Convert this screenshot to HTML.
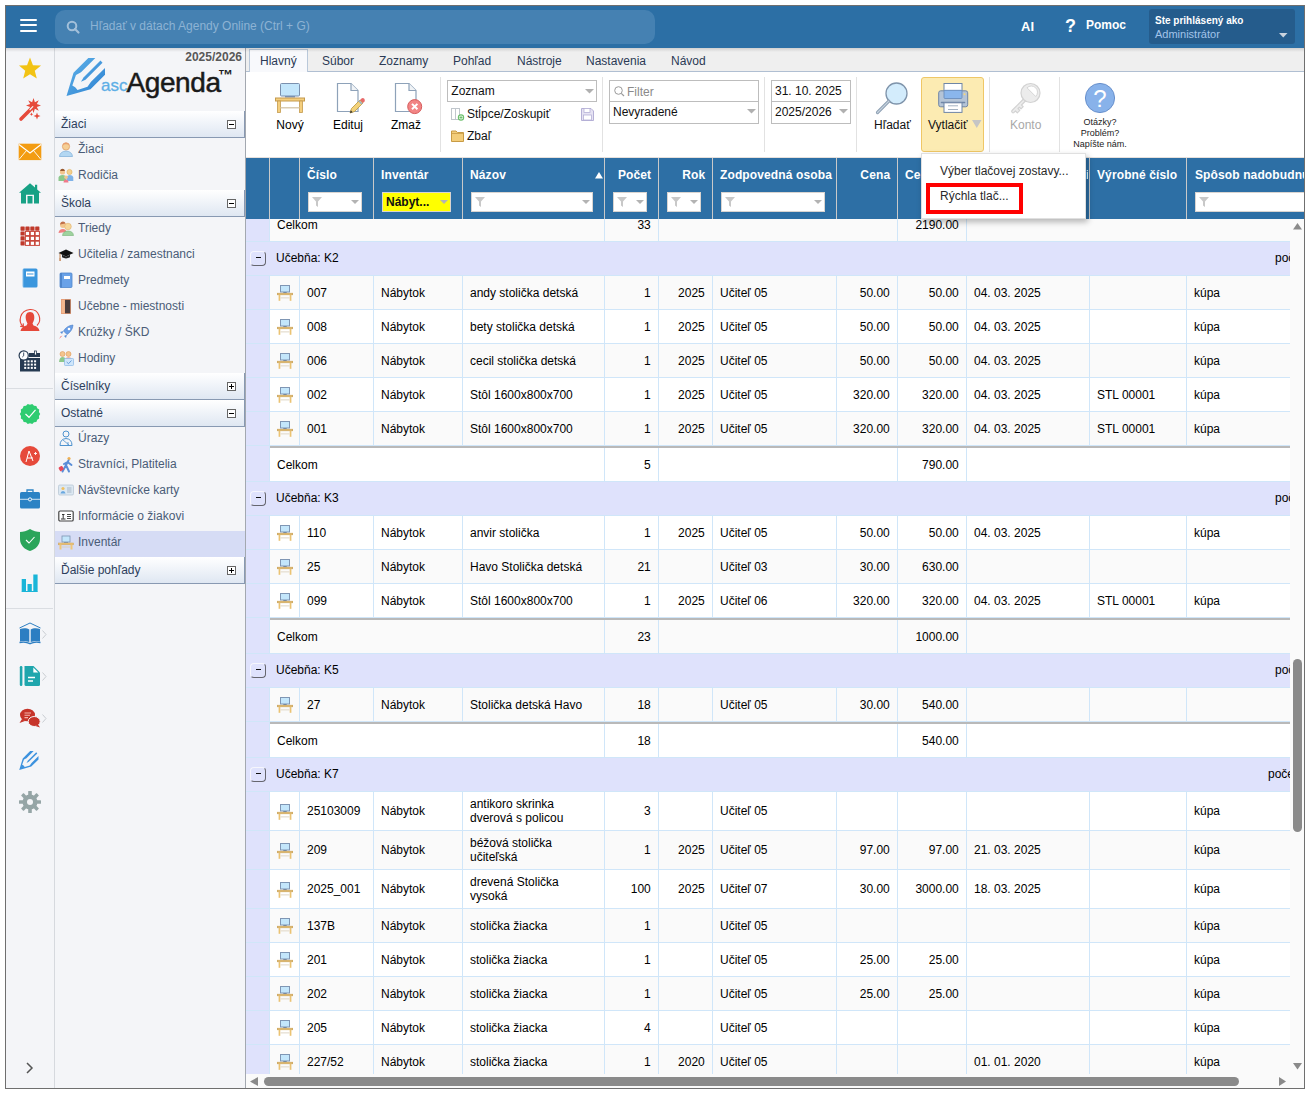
<!DOCTYPE html><html><head><meta charset="utf-8"><style>
*{box-sizing:border-box}
html,body{margin:0;padding:0}
body{width:1310px;height:1094px;position:relative;overflow:hidden;background:#fff;font-family:"Liberation Sans",sans-serif;font-size:12px;color:#000}
.a{position:absolute}
.t{position:absolute;white-space:nowrap;line-height:14px}
.r{text-align:right}
svg{position:absolute;overflow:visible}
</style></head><body><div class="a" style="left:5px;top:5px;width:1300px;height:1084px;border:1px solid #6f6f6f;background:#fff"></div>
<div class="a" style="left:6px;top:6px;width:1298px;height:42px;background:#2c6fa5"></div>
<div class="a" style="left:20px;top:19px;width:17px;height:2px;background:#fff;border-radius:1px"></div>
<div class="a" style="left:20px;top:24px;width:17px;height:2px;background:#fff;border-radius:1px"></div>
<div class="a" style="left:20px;top:30px;width:17px;height:2px;background:#fff;border-radius:1px"></div>
<div class="a" style="left:55px;top:10px;width:600px;height:34px;background:#4581b2;border-radius:10px"></div>
<svg style="left:66px;top:20px" width="14" height="14" viewBox="0 0 14 14"><circle cx="6" cy="6" r="4.3" fill="none" stroke="#a3c0da" stroke-width="2"/><line x1="9" y1="9" x2="12.5" y2="12.5" stroke="#a3c0da" stroke-width="2.2" stroke-linecap="round"/></svg>
<div class="t" style="left:90px;top:19.34px;font-size:12px;line-height:14px;color:#8db3d4">Hľadať v dátach Agendy Online (Ctrl + G)</div>
<div class="t" style="left:1021px;top:18.70px;font-size:13px;line-height:15px;color:#fff;font-weight:bold">AI</div>
<div class="t" style="left:1065px;top:16.26px;font-size:18px;line-height:21px;color:#fff;font-weight:bold">?</div>
<div class="t" style="left:1086px;top:17.84px;font-size:12px;line-height:14px;color:#fff;font-weight:bold">Pomoc</div>
<div class="a" style="left:1149px;top:9px;width:146px;height:35px;background:#255c8c;border-radius:3px"></div>
<div class="t" style="left:1155px;top:13.73px;font-size:10px;line-height:14px;color:#fff;font-weight:bold">Ste prihlásený ako</div>
<div class="t" style="left:1155px;top:27.19px;font-size:11px;line-height:14px;color:#a3c4ea">Administrátor</div>
<svg style="left:1279px;top:33px" width="9" height="5" viewBox="0 0 9 5"><path d="M0 0 L8.5 0 L4.25 4.5 Z" fill="#c9d3de"/></svg>
<div class="a" style="left:6px;top:48px;width:49px;height:1040px;background:#f4f5f8;border-right:1px solid #d6d9de"></div>
<div class="a" style="left:6px;top:388px;width:47px;height:1px;background:#dadde2"></div>
<div class="a" style="left:6px;top:608px;width:47px;height:1px;background:#dadde2"></div>
<svg style="left:14px;top:52px" width="32" height="32" viewBox="0 0 32 32"><polygon points="16.00,5.60 18.94,13.15 27.03,13.62 20.76,18.75 22.82,26.58 16.00,22.20 9.18,26.58 11.24,18.75 4.97,13.62 13.06,13.15" fill="#f2c314"/></svg>
<svg style="left:14px;top:94px" width="32" height="32" viewBox="0 0 32 32"><polygon points="19.50,4.00 20.88,8.17 24.80,6.20 22.83,10.12 27.00,11.50 22.83,12.88 24.80,16.80 20.88,14.83 19.50,19.00 18.12,14.83 14.20,16.80 16.17,12.88 12.00,11.50 16.17,10.12 14.20,6.20 18.12,8.17" fill="#e64a3b"/><path d="M7 25 L18 14" stroke="#e64a3b" stroke-width="3.6" stroke-linecap="round"/><path d="M16 15.5 L18.8 12.7" stroke="#f4f5f8" stroke-width="1.2" stroke-linecap="round"/><polygon points="19.30,20.30 18.07,20.87 17.50,22.10 16.93,20.87 15.70,20.30 16.93,19.73 17.50,18.50 18.07,19.73" fill="#e64a3b"/><polygon points="26.50,22.00 23.92,22.92 23.00,25.50 22.08,22.92 19.50,22.00 22.08,21.08 23.00,18.50 23.92,21.08" fill="#e64a3b"/></svg>
<svg style="left:14px;top:136px" width="32" height="32" viewBox="0 0 32 32"><rect x="4.7" y="7.7" width="22.6" height="16.4" fill="#f39c12"/><path d="M5 8.5 L16 17 L27 8.5" fill="none" stroke="#fff" stroke-width="1.1"/><path d="M5 23.5 L12.5 14.5 M27 23.5 L19.5 14.5" stroke="#fff" stroke-width="0.9"/></svg>
<svg style="left:14px;top:178px" width="32" height="32" viewBox="0 0 32 32"><path d="M16 5.2 L21 9.5 V6.7 H23.2 V11.5 L27 14.8 H25 V25.5 H20 V16.7 H12 V25.5 H7 V14.8 H5 Z" fill="#17a185"/><rect x="13.5" y="18" width="5" height="7.5" fill="#17a185"/></svg>
<svg style="left:14px;top:220px" width="32" height="32" viewBox="0 0 32 32"><rect x="6.5" y="6.5" width="4.2" height="4.2" rx="0.6" fill="#c0392b"/><rect x="6.5" y="11.4" width="4.2" height="4.2" rx="0.6" fill="#c0392b"/><rect x="6.5" y="16.3" width="4.2" height="4.2" rx="0.6" fill="#c0392b"/><rect x="6.5" y="21.200000000000003" width="4.2" height="4.2" rx="0.6" fill="#c0392b"/><rect x="11.4" y="6.5" width="4.2" height="4.2" rx="0.6" fill="#c0392b"/><rect x="11.4" y="11.4" width="4.2" height="4.2" fill="#fff" stroke="#c8483c" stroke-width="1"/><rect x="11.4" y="16.3" width="4.2" height="4.2" fill="#fff" stroke="#c8483c" stroke-width="1"/><rect x="11.4" y="21.200000000000003" width="4.2" height="4.2" fill="#fff" stroke="#c8483c" stroke-width="1"/><rect x="16.3" y="6.5" width="4.2" height="4.2" rx="0.6" fill="#c0392b"/><rect x="16.3" y="11.4" width="4.2" height="4.2" fill="#fff" stroke="#c8483c" stroke-width="1"/><rect x="16.3" y="16.3" width="4.2" height="4.2" fill="#fff" stroke="#c8483c" stroke-width="1"/><rect x="16.3" y="21.200000000000003" width="4.2" height="4.2" fill="#fff" stroke="#c8483c" stroke-width="1"/><rect x="21.200000000000003" y="6.5" width="4.2" height="4.2" rx="0.6" fill="#c0392b"/><rect x="21.200000000000003" y="11.4" width="4.2" height="4.2" fill="#fff" stroke="#c8483c" stroke-width="1"/><rect x="21.200000000000003" y="16.3" width="4.2" height="4.2" fill="#fff" stroke="#c8483c" stroke-width="1"/><rect x="21.200000000000003" y="21.200000000000003" width="4.2" height="4.2" fill="#fff" stroke="#c8483c" stroke-width="1"/></svg>
<svg style="left:14px;top:262px" width="32" height="32" viewBox="0 0 32 32"><rect x="8.5" y="6.5" width="15" height="19" rx="1.5" fill="#3a96dd"/><rect x="12" y="9.5" width="8.5" height="5" fill="#fff"/><rect x="13" y="11.5" width="6.5" height="1" fill="#3a96dd"/><path d="M8 8 h1.5 M8 10 h1.5 M8 12 h1.5 M8 14 h1.5 M8 16 h1.5 M8 18 h1.5 M8 20 h1.5 M8 22 h1.5 M8 24 h1.5" stroke="#fff" stroke-width="0.7"/></svg>
<svg style="left:14px;top:304px" width="32" height="32" viewBox="0 0 32 32"><path d="M16 8 C19.5 8 20.5 11 20.3 14 C20.2 16.5 19 18.5 18.5 19.5 L19.5 21.5 C23 22.3 25 24 25.5 27 H6.5 C7 24 9 22.3 12.5 21.5 L13.5 19.5 C13 18.5 11.8 16.5 11.7 14 C11.5 11 12.5 8 16 8 Z" fill="#e5483a"/><path d="M9 22.5 C4 18 5.5 6.5 16 5.5 C25 5 28.5 16 23 21.5" fill="none" stroke="#e5483a" stroke-width="1.1"/><path d="M6.2 22.4 L9.4 22.7 L9.2 19.4" fill="none" stroke="#e5483a" stroke-width="1.1"/></svg>
<svg style="left:14px;top:345px" width="32" height="32" viewBox="0 0 32 32"><rect x="6" y="13" width="20" height="13.5" fill="#263a52"/><rect x="15" y="8" width="11" height="4" fill="#263a52"/><rect x="20.5" y="6" width="2" height="4" fill="#fff" stroke="#263a52" stroke-width="0.8"/><rect x="10.2" y="15.3" width="2" height="2" fill="#fff"/><rect x="10.2" y="18.6" width="2" height="2" fill="#fff"/><rect x="10.2" y="21.9" width="2" height="2" fill="#fff"/><rect x="13.5" y="15.3" width="2" height="2" fill="#fff"/><rect x="13.5" y="18.6" width="2" height="2" fill="#fff"/><rect x="13.5" y="21.9" width="2" height="2" fill="#fff"/><rect x="16.799999999999997" y="15.3" width="2" height="2" fill="#fff"/><rect x="16.799999999999997" y="18.6" width="2" height="2" fill="#fff"/><rect x="16.799999999999997" y="21.9" width="2" height="2" fill="#fff"/><rect x="20.099999999999998" y="15.3" width="2" height="2" fill="#fff"/><rect x="20.099999999999998" y="18.6" width="2" height="2" fill="#fff"/><rect x="20.099999999999998" y="21.9" width="2" height="2" fill="#fff"/><circle cx="9.7" cy="10.5" r="4.6" fill="#fff" stroke="#263a52" stroke-width="1.2"/><path d="M9.7 7.5 V10.8 L8.3 12" fill="none" stroke="#263a52" stroke-width="0.9"/></svg>
<svg style="left:14px;top:398px" width="32" height="32" viewBox="0 0 32 32"><polygon points="26.20,16.00 24.97,18.05 25.19,20.43 23.19,21.74 22.36,23.97 19.99,24.29 18.27,25.94 16.00,25.20 13.73,25.94 12.01,24.29 9.64,23.97 8.81,21.74 6.81,20.43 7.03,18.05 5.80,16.00 7.03,13.95 6.81,11.57 8.81,10.26 9.64,8.03 12.01,7.71 13.73,6.06 16.00,6.80 18.27,6.06 19.99,7.71 22.36,8.03 23.19,10.26 25.19,11.57 24.97,13.95" fill="#2ecc71"/><path d="M11.5 16 L15 19.3 L21.5 11.8" fill="none" stroke="#fff" stroke-width="1.2"/></svg>
<svg style="left:14px;top:440px" width="32" height="32" viewBox="0 0 32 32"><circle cx="16" cy="16" r="10" fill="#e64a3b"/><path d="M12 22 L15 11 L19 21 M13 18 H19" fill="none" stroke="#fff" stroke-width="1"/><path d="M20 13.5 H23 M21.5 12 V15" stroke="#fff" stroke-width="0.9"/></svg>
<svg style="left:14px;top:482px" width="32" height="32" viewBox="0 0 32 32"><rect x="6" y="10" width="20" height="16.5" rx="1.5" fill="#2b82c4"/><path d="M13 10 V8 H19 V10" fill="none" stroke="#2b82c4" stroke-width="1.3"/><path d="M6 17.3 H26" stroke="#cfe3f3" stroke-width="1"/><circle cx="16" cy="17.4" r="1.6" fill="#2b82c4" stroke="#fff" stroke-width="0.9"/></svg>
<svg style="left:14px;top:524px" width="32" height="32" viewBox="0 0 32 32"><path d="M16 5 C19 7 23 8 26 8 V15 C26 21 21.5 25.5 16 27 C10.5 25.5 6 21 6 15 V8 C9 8 13 7 16 5 Z" fill="#2aa55a"/><path d="M12 16 L15 19 L20.5 13" fill="none" stroke="#fff" stroke-width="1.1"/></svg>
<svg style="left:14px;top:566px" width="32" height="32" viewBox="0 0 32 32"><rect x="7.7" y="13" width="4.3" height="12.5" fill="#19b5d8"/><rect x="13.5" y="18" width="4.3" height="7.5" fill="#19b5d8"/><rect x="19.3" y="8.5" width="4.3" height="17" fill="#19b5d8"/><rect x="7.7" y="25" width="15.9" height="1" fill="#19b5d8"/></svg>
<svg style="left:14px;top:618px" width="32" height="32" viewBox="0 0 32 32"><path d="M5.5 10 L16 5 L26.5 10" fill="none" stroke="#2c7ec2" stroke-width="1"/><path d="M6 11 C9 10 13 10 15.3 11.5 V24 C13 23 9 23 6 23.5 Z" fill="#2c7ec2"/><path d="M26 11 C23 10 19 10 16.7 11.5 V24 C19 23 23 23 26 23.5 Z" fill="#2c7ec2"/><path d="M5.5 24.5 C9 23.8 13 24 16 25.7 C19 24 23 23.8 26.5 24.5" fill="none" stroke="#2c7ec2" stroke-width="1.4"/></svg>
<svg style="left:42px;top:630px" width="6" height="10" viewBox="0 0 6 10"><path d="M0.5 0.5 L4 4.5 L0.5 8.5" fill="none" stroke="#c9cdd2" stroke-width="1"/></svg>
<svg style="left:14px;top:660px" width="32" height="32" viewBox="0 0 32 32"><rect x="5.8" y="6" width="2.6" height="20" rx="1.2" fill="#1fa6ad"/><path d="M10.5 6 H19.5 L26 12.5 V24.5 Q26 26 24.5 26 H12 Q10.5 26 10.5 24.5 Z" fill="#1fa6ad"/><path d="M19.3 7.5 L24.3 12.5 H19.3 Z" fill="#fff"/><path d="M14 17.5 H21 M14 21 H19" stroke="#fff" stroke-width="1.5"/></svg>
<svg style="left:42px;top:672px" width="6" height="10" viewBox="0 0 6 10"><path d="M0.5 0.5 L4 4.5 L0.5 8.5" fill="none" stroke="#c9cdd2" stroke-width="1"/></svg>
<svg style="left:14px;top:702px" width="32" height="32" viewBox="0 0 32 32"><ellipse cx="13.5" cy="13" rx="7.5" ry="6.3" fill="#c6342a"/><path d="M8 17 L5.5 21 L11 19" fill="#c6342a"/><ellipse cx="20.2" cy="19.5" rx="6" ry="5" fill="#c6342a" stroke="#f4f5f8" stroke-width="1"/><path d="M24 22.5 L26 25.5 L21.5 24" fill="#c6342a"/><path d="M10.5 11 H17 M10.5 13.3 H16 M10.5 15.6 H14" stroke="#f3b5ae" stroke-width="1.1"/></svg>
<svg style="left:42px;top:714px" width="6" height="10" viewBox="0 0 6 10"><path d="M0.5 0.5 L4 4.5 L0.5 8.5" fill="none" stroke="#c9cdd2" stroke-width="1"/></svg>
<svg style="left:17px;top:748px" width="24" height="24" viewBox="0 0 24 24"><g transform="scale(0.5)"><path d="M26.3 6 L33.3 6 L19 20.3 L14 23 L10.3 33.5 Q13.5 34.5 15.5 38 L25.5 34.8 L29 29.8 L43 16 L43 22.8 L28.5 37.2 L4.5 44 L11.5 20.8 Z" fill="#3d92de"/><path d="M38.5 8.5 L40.5 10.8 L23.5 27.7 L19 29.8 L21.5 25.5 Z" fill="#3d92de"/></g></svg>
<svg style="left:14px;top:786px" width="32" height="32" viewBox="0 0 32 32"><rect x="14.2" y="5" width="3.6" height="5" rx="0.5" fill="#95a5a6" transform="rotate(0 16 16)"/><rect x="14.2" y="5" width="3.6" height="5" rx="0.5" fill="#95a5a6" transform="rotate(45 16 16)"/><rect x="14.2" y="5" width="3.6" height="5" rx="0.5" fill="#95a5a6" transform="rotate(90 16 16)"/><rect x="14.2" y="5" width="3.6" height="5" rx="0.5" fill="#95a5a6" transform="rotate(135 16 16)"/><rect x="14.2" y="5" width="3.6" height="5" rx="0.5" fill="#95a5a6" transform="rotate(180 16 16)"/><rect x="14.2" y="5" width="3.6" height="5" rx="0.5" fill="#95a5a6" transform="rotate(225 16 16)"/><rect x="14.2" y="5" width="3.6" height="5" rx="0.5" fill="#95a5a6" transform="rotate(270 16 16)"/><rect x="14.2" y="5" width="3.6" height="5" rx="0.5" fill="#95a5a6" transform="rotate(315 16 16)"/><circle cx="16" cy="16" r="7.5" fill="#95a5a6"/><circle cx="16" cy="16" r="3" fill="#f4f5f8"/></svg>
<svg style="left:26px;top:1062px" width="8" height="12" viewBox="0 0 8 12"><path d="M1 1 L6 6 L1 11" fill="none" stroke="#555" stroke-width="1.5"/></svg>
<div class="a" style="left:55px;top:48px;width:191px;height:1040px;background:#f4f5f8;border-right:1px solid #a3a8b0"></div>
<div class="t r" style="left:162px;width:80px;top:50.34px;font-size:12px;line-height:14px;color:#585858;font-weight:bold">2025/2026</div>
<svg style="left:62px;top:52px" width="50" height="50" viewBox="0 0 50 50"><defs><linearGradient id="lg" x1="0" y1="0" x2="1" y2="1"><stop offset="0" stop-color="#62b4ea"/><stop offset="1" stop-color="#2a7fd0"/></linearGradient></defs><path d="M26.3 6 L33.3 6 L19 20.3 L14 23 L10.3 33.5 Q13.5 34.5 15.5 38 L25.5 34.8 L29 29.8 L43 16 L43 22.8 L28.5 37.2 L4.5 44 L11.5 20.8 Z" fill="url(#lg)"/><path d="M38.5 8.5 L40.5 10.8 L23.5 27.7 L19 29.8 L21.5 25.5 Z" fill="url(#lg)"/></svg>
<div class="t" style="left:101px;top:76.41px;font-size:17px;line-height:20px;color:#5eaee6;-webkit-text-stroke:0.3px #5eaee6">asc</div>
<div class="t" style="left:126.5px;top:66.20px;font-size:28px;line-height:33px;color:#1a1a1a;-webkit-text-stroke:0.5px #1a1a1a;letter-spacing:-0.4px">Agenda</div>
<div class="t" style="left:218px;top:65.80px;font-size:15px;line-height:18px;color:#1a1a1a;font-weight:bold">™</div>
<div class="a" style="left:55px;top:111px;width:190px;height:27px;background:linear-gradient(#ffffff,#dfe7f2);border-bottom:1px solid #8899b2;border-right:1px solid #8899b2"></div>
<div class="t" style="left:61px;top:116.54px;font-size:12px;line-height:14px;color:#2d3e5c">Žiaci</div>
<div class="a" style="left:227px;top:120px;width:9px;height:9px;background:#fff;border:1px solid #666"></div>
<div class="a" style="left:229px;top:124px;width:5px;height:1px;background:#000"></div>
<div class="t" style="left:78px;top:141.84px;font-size:12px;line-height:14px;color:#4a5c77">Žiaci</div>
<svg style="left:58px;top:141px" width="16" height="16" viewBox="0 0 16 16"><circle cx="8" cy="5.5" r="3.6" fill="#f6cf95" stroke="#e0a068" stroke-width="0.8"/><path d="M4.5 4.5 Q5 1.5 8 1.5 Q11 1.5 11.5 4.5 Q10 3 8 3.2 Q6 3 4.5 4.5Z" fill="#e8a070"/><path d="M1.5 15.5 Q2 10.5 8 10 Q14 10.5 14.5 15.5 Z" fill="#b3d7f2" stroke="#86b4dc" stroke-width="0.8"/></svg>
<div class="t" style="left:78px;top:167.84px;font-size:12px;line-height:14px;color:#4a5c77">Rodičia</div>
<svg style="left:58px;top:167px" width="16" height="16" viewBox="0 0 16 16"><circle cx="4.5" cy="5" r="2.6" fill="#f3c58e"/><path d="M2 4 Q2.5 1.8 4.5 1.8 Q6.5 1.8 7 4Z" fill="#9a5a30"/><path d="M0.5 14 V10.5 Q1 8 4.5 8 Q8 8 8 10.5 V14Z" fill="#8cc88c"/><circle cx="11.5" cy="5" r="2.6" fill="#f3d08e" stroke="#e0b060" stroke-width="0.6"/><path d="M8.5 14 V10.5 Q9 8 11.5 8 Q15 8 15.3 10.5 V14Z" fill="#7fb2e8"/><circle cx="8" cy="10.3" r="1.8" fill="#f3c58e"/><path d="M5.5 15.5 Q5.7 12.5 8 12.5 Q10.3 12.5 10.5 15.5Z" fill="#f07a8a"/></svg>
<div class="a" style="left:55px;top:190px;width:190px;height:27px;background:linear-gradient(#ffffff,#dfe7f2);border-bottom:1px solid #8899b2;border-right:1px solid #8899b2"></div>
<div class="t" style="left:61px;top:195.54px;font-size:12px;line-height:14px;color:#2d3e5c">Škola</div>
<div class="a" style="left:227px;top:199px;width:9px;height:9px;background:#fff;border:1px solid #666"></div>
<div class="a" style="left:229px;top:203px;width:5px;height:1px;background:#000"></div>
<div class="t" style="left:78px;top:220.84px;font-size:12px;line-height:14px;color:#4a5c77">Triedy</div>
<svg style="left:58px;top:220px" width="16" height="16" viewBox="0 0 16 16"><circle cx="5" cy="5" r="3" fill="#f3c58e"/><path d="M2 4.5 Q2.5 1.5 5 1.5 Q7 1.5 7.5 3.5Z" fill="#c0704a"/><path d="M0.5 13 Q1 9 5 9 Q8 9 8.5 12 Z" fill="#f08080"/><circle cx="10" cy="6.5" r="3.3" fill="#f6d79a" stroke="#e0b070" stroke-width="0.6"/><path d="M4.5 15.5 Q5 11 10 11 Q15 11 15.5 15.5 Z" fill="#9ed29e" stroke="#76b276" stroke-width="0.6"/></svg>
<div class="t" style="left:78px;top:246.84px;font-size:12px;line-height:14px;color:#4a5c77">Učitelia / zamestnanci</div>
<svg style="left:58px;top:246px" width="16" height="16" viewBox="0 0 16 16"><path d="M0.5 7 L8 3.5 L15.5 7 L8 10.5 Z" fill="#111"/><path d="M4 8.7 V11.3 Q8 13.5 12 11.3 V8.7 L8 10.5Z" fill="#222"/><path d="M2 7.5 V13" stroke="#c07840" stroke-width="0.9"/><rect x="1.4" y="12.5" width="1.3" height="2.5" fill="#c07840"/></svg>
<div class="t" style="left:78px;top:272.84px;font-size:12px;line-height:14px;color:#4a5c77">Predmety</div>
<svg style="left:58px;top:272px" width="16" height="16" viewBox="0 0 16 16"><rect x="2" y="1" width="12" height="14.5" rx="1" fill="#6aa2e8" stroke="#4f86cc" stroke-width="0.8"/><rect x="2" y="1" width="2" height="14.5" fill="#4f86cc"/><rect x="6" y="4" width="6" height="3" fill="#fff"/></svg>
<div class="t" style="left:78px;top:298.84px;font-size:12px;line-height:14px;color:#4a5c77">Učebne - miestnosti</div>
<svg style="left:58px;top:298px" width="16" height="16" viewBox="0 0 16 16"><rect x="3" y="1" width="10" height="15" fill="#e8a07a"/><rect x="7" y="1.8" width="5.3" height="13.5" fill="#4a3c3c"/><rect x="3.8" y="2" width="3" height="13" fill="#f4b890"/></svg>
<div class="t" style="left:78px;top:324.84px;font-size:12px;line-height:14px;color:#4a5c77">Krúžky / ŠKD</div>
<svg style="left:58px;top:324px" width="16" height="16" viewBox="0 0 16 16"><path d="M15 1 Q9 1.5 5.5 7 L9 10.5 Q14.5 7 15 1Z" fill="#6a9ee6" stroke="#4c80c8" stroke-width="0.6"/><circle cx="11" cy="5" r="1.3" fill="#fff"/><path d="M5.5 7 L2 8 L4 10Z M9 10.5 L8 14 L6 12Z" fill="#5a8ed8"/><path d="M4.5 11.5 L1 15 L2.5 12.5 Z" fill="#f06060"/></svg>
<div class="t" style="left:78px;top:350.84px;font-size:12px;line-height:14px;color:#4a5c77">Hodiny</div>
<svg style="left:58px;top:350px" width="16" height="16" viewBox="0 0 16 16"><circle cx="4.5" cy="4" r="2.5" fill="#f3c58e" stroke="#e09a5a" stroke-width="0.6"/><circle cx="10.5" cy="4" r="2.5" fill="#f3c58e" stroke="#e09a5a" stroke-width="0.6"/><path d="M1 12 Q1.5 7 4.5 7 Q7.5 7 8 10 V12Z" fill="#8cc88c"/><path d="M7 10 Q7.5 7 10.5 7 Q13 7 13.5 9Z" fill="#f0b0a0"/><rect x="6.5" y="8.5" width="9" height="7" rx="0.8" fill="#cfe6fb" stroke="#8ab8e6" stroke-width="0.7"/><path d="M8.7 12 L10.5 13.7 L13.5 10.5" fill="none" stroke="#5a94d6" stroke-width="0.9"/></svg>
<div class="a" style="left:55px;top:373px;width:190px;height:27px;background:linear-gradient(#ffffff,#dfe7f2);border-bottom:1px solid #8899b2;border-right:1px solid #8899b2"></div>
<div class="t" style="left:61px;top:378.54px;font-size:12px;line-height:14px;color:#2d3e5c">Číselníky</div>
<div class="a" style="left:227px;top:382px;width:9px;height:9px;background:#fff;border:1px solid #666"></div>
<div class="a" style="left:229px;top:386px;width:5px;height:1px;background:#000"></div>
<div class="a" style="left:231px;top:384px;width:1px;height:5px;background:#000"></div>
<div class="a" style="left:55px;top:400px;width:190px;height:27px;background:linear-gradient(#ffffff,#dfe7f2);border-bottom:1px solid #8899b2;border-right:1px solid #8899b2"></div>
<div class="t" style="left:61px;top:405.54px;font-size:12px;line-height:14px;color:#2d3e5c">Ostatné</div>
<div class="a" style="left:227px;top:409px;width:9px;height:9px;background:#fff;border:1px solid #666"></div>
<div class="a" style="left:229px;top:413px;width:5px;height:1px;background:#000"></div>
<div class="t" style="left:78px;top:430.84px;font-size:12px;line-height:14px;color:#4a5c77">Úrazy</div>
<svg style="left:58px;top:430px" width="16" height="16" viewBox="0 0 16 16"><circle cx="8" cy="4" r="3" fill="none" stroke="#4f93cf" stroke-width="1"/><path d="M2 15.5 Q2 9 8 8.5 Q14 9 14 15.5Z" fill="none" stroke="#4f93cf" stroke-width="1"/><path d="M5 10 L11 15 M10 15.5 V12" stroke="#4f93cf" stroke-width="0.8"/></svg>
<div class="t" style="left:78px;top:456.84px;font-size:12px;line-height:14px;color:#4a5c77">Stravníci, Platitelia</div>
<svg style="left:58px;top:456px" width="16" height="16" viewBox="0 0 16 16"><circle cx="11" cy="2.5" r="1.6" fill="#f0b050"/><path d="M10.5 4.5 L7.5 10 L4.5 15.5 M8 9 L11 15.5 M9.5 6 L13.5 9 M9.5 6 L6 8" stroke="#5a8ed8" stroke-width="2" fill="none" stroke-linecap="round"/><rect x="1" y="10.5" width="4.3" height="4.3" rx="1" fill="#e84a5a" transform="rotate(-30 3 12.5)"/></svg>
<div class="t" style="left:78px;top:482.84px;font-size:12px;line-height:14px;color:#4a5c77">Návštevnícke karty</div>
<svg style="left:58px;top:482px" width="16" height="16" viewBox="0 0 16 16"><rect x="0.5" y="3" width="15" height="10" rx="1.3" fill="#dce8f2" stroke="#b9c8d6" stroke-width="0.8"/><circle cx="5" cy="6.5" r="1.6" fill="#f0c060"/><path d="M2.5 11.5 Q2.7 9 5 9 Q7.3 9 7.5 11.5Z" fill="#6aa8e0"/><path d="M9 6 H13.5 M9 8 H13.5 M9 10 H13.5" stroke="#a8b8c8" stroke-width="1"/></svg>
<div class="t" style="left:78px;top:508.84px;font-size:12px;line-height:14px;color:#4a5c77">Informácie o žiakovi</div>
<svg style="left:58px;top:508px" width="16" height="16" viewBox="0 0 16 16"><rect x="0.8" y="3" width="14.4" height="10" rx="1.3" fill="#fff" stroke="#444" stroke-width="1.2"/><path d="M3 11 H7.5 M5.2 10.8 V6.5 M4 6.5 H6.5" stroke="#333" stroke-width="1"/><path d="M9 6.5 H13 M9 8.5 H13 M9 10.5 H13" stroke="#333" stroke-width="0.9"/></svg>
<div class="a" style="left:55px;top:531px;width:190px;height:26px;background:#d6dcf5"></div>
<div class="t" style="left:78px;top:534.84px;font-size:12px;line-height:14px;color:#4a5c77">Inventár</div>
<svg style="left:58px;top:534px" width="16" height="16" viewBox="0 0 16 16"><rect x="4" y="2" width="8" height="6" fill="#c3e6fb" stroke="#7d94b2" stroke-width="0.8"/><rect x="6" y="8" width="4" height="1" fill="#7d94b2"/><rect x="0.5" y="9" width="15" height="1.8" fill="#f0c77a" stroke="#c9a055" stroke-width="0.5"/><rect x="1.5" y="10.5" width="2" height="5" fill="#f0c77a"/><rect x="12.5" y="10.5" width="2" height="5" fill="#f0c77a"/><rect x="3.5" y="12.5" width="9" height="1" fill="#d8d0c0"/></svg>
<div class="a" style="left:55px;top:557px;width:190px;height:27px;background:linear-gradient(#ffffff,#dfe7f2);border-bottom:1px solid #8899b2;border-right:1px solid #8899b2"></div>
<div class="t" style="left:61px;top:562.54px;font-size:12px;line-height:14px;color:#2d3e5c">Ďalšie pohľady</div>
<div class="a" style="left:227px;top:566px;width:9px;height:9px;background:#fff;border:1px solid #666"></div>
<div class="a" style="left:229px;top:570px;width:5px;height:1px;background:#000"></div>
<div class="a" style="left:231px;top:568px;width:1px;height:5px;background:#000"></div>
<div class="a" style="left:246px;top:48px;width:1058px;height:24px;background:#efefef;border-bottom:1px solid #b0bfd2"></div>
<div class="a" style="left:249px;top:49px;width:59px;height:23px;background:#f8f9fc;border:1px solid #b9c8da;border-bottom:none"></div>
<div class="t" style="left:260px;top:53.54px;font-size:12px;line-height:14px;color:#2b3a55">Hlavný</div>
<div class="t" style="left:322px;top:53.54px;font-size:12px;line-height:14px;color:#2b3a55">Súbor</div>
<div class="t" style="left:379px;top:53.54px;font-size:12px;line-height:14px;color:#2b3a55">Zoznamy</div>
<div class="t" style="left:453px;top:53.54px;font-size:12px;line-height:14px;color:#2b3a55">Pohľad</div>
<div class="t" style="left:517px;top:53.54px;font-size:12px;line-height:14px;color:#2b3a55">Nástroje</div>
<div class="t" style="left:586px;top:53.54px;font-size:12px;line-height:14px;color:#2b3a55">Nastavenia</div>
<div class="t" style="left:671px;top:53.54px;font-size:12px;line-height:14px;color:#2b3a55">Návod</div>
<div class="a" style="left:246px;top:72px;width:1058px;height:86px;background:#fff"></div>
<div class="a" style="left:246px;top:157px;width:1058px;height:1px;background:#e6e0dc"></div>
<div class="a" style="left:440px;top:77px;width:1px;height:75px;background:#e2e2e2"></div>
<div class="a" style="left:602px;top:77px;width:1px;height:75px;background:#e2e2e2"></div>
<div class="a" style="left:764px;top:77px;width:1px;height:75px;background:#e2e2e2"></div>
<div class="a" style="left:856px;top:77px;width:1px;height:75px;background:#e2e2e2"></div>
<div class="a" style="left:989px;top:77px;width:1px;height:75px;background:#e2e2e2"></div>
<div class="a" style="left:1059px;top:77px;width:1px;height:75px;background:#e2e2e2"></div>
<svg style="left:275px;top:83px" width="30" height="30" viewBox="0 0 30 30"><rect x="5.5" y="0.5" width="19" height="12.5" rx="1" fill="#c3e6fb" stroke="#7a90ae" stroke-width="1"/><rect x="10" y="13" width="10" height="1.5" fill="#7a90ae"/><rect x="0.5" y="15" width="29" height="3" fill="#f5cf7e" stroke="#c49a4e" stroke-width="1"/><rect x="2.5" y="18" width="3" height="11.5" fill="#f5cf7e" stroke="#c49a4e" stroke-width="0.8"/><rect x="24.5" y="18" width="3" height="11.5" fill="#f5cf7e" stroke="#c49a4e" stroke-width="0.8"/><rect x="5.5" y="24" width="19" height="1.5" fill="#d9ccb2"/></svg>
<div class="t" style="left:230.0px;width:120px;text-align:center;top:118.14px;font-size:12px;line-height:14px;">Nový</div>
<svg style="left:337px;top:83px" width="22" height="30" viewBox="0 0 22 30"><path d="M0.5 0.5 H14 L21 7.5 V28.5 H0.5 Z" fill="#fff" stroke="#8ea2b9" stroke-width="1.2"/><path d="M14 0.5 V7.5 H21" fill="#f0f3f6" stroke="#8ea2b9" stroke-width="1.2"/></svg>
<svg style="left:349px;top:98px" width="16" height="16" viewBox="0 0 16 16"><path d="M1 15 L2.5 10.5 L11 2 L14 5 L5.5 13.5 Z" fill="#f3d27a" stroke="#b8943c" stroke-width="0.8"/><path d="M11 2 L12.5 0.5 Q14 -0.5 15.3 0.8 Q16.3 2 15.5 3.5 L14 5 Z" fill="#e86a6a"/><path d="M10 3 L13 6" stroke="#9ab0c8" stroke-width="1.6"/><path d="M1 15 L1.8 12.3 L3.7 14.2 Z" fill="#333"/></svg>
<div class="t" style="left:288.0px;width:120px;text-align:center;top:118.14px;font-size:12px;line-height:14px;">Edituj</div>
<svg style="left:395px;top:83px" width="22" height="30" viewBox="0 0 22 30"><path d="M0.5 0.5 H14 L21 7.5 V28.5 H0.5 Z" fill="#fff" stroke="#8ea2b9" stroke-width="1.2"/><path d="M14 0.5 V7.5 H21" fill="#f0f3f6" stroke="#8ea2b9" stroke-width="1.2"/></svg>
<svg style="left:407px;top:99px" width="16" height="16" viewBox="0 0 16 16"><circle cx="7.7" cy="7.6" r="7" fill="#f28585" stroke="#d65b5b" stroke-width="1"/><path d="M5 4.9 L10.4 10.3 M10.4 4.9 L5 10.3" stroke="#fff" stroke-width="2"/></svg>
<div class="t" style="left:346.0px;width:120px;text-align:center;top:118.14px;font-size:12px;line-height:14px;">Zmaž</div>
<div class="a" style="left:447px;top:80px;width:150px;height:22px;border:1px solid #bdbdbd;background:#fff"></div>
<div class="t" style="left:451.3px;top:84.34px;font-size:12px;line-height:14px;color:#111">Zoznam</div>
<svg style="left:585px;top:89px" width="9" height="5" viewBox="0 0 9 5"><path d="M0 0 H9 L4.5 4.5 Z" fill="#b0b0b0"/></svg>
<svg style="left:451px;top:108px" width="13" height="13" viewBox="0 0 13 13"><rect x="0.5" y="0.5" width="4" height="11" fill="#fff" stroke="#c0c6cc" stroke-width="1"/><rect x="4.5" y="0.5" width="4" height="11" fill="#fff" stroke="#c0c6cc" stroke-width="1"/><circle cx="10" cy="9.5" r="2.6" fill="#fff" stroke="#6cbf6c" stroke-width="1.2"/><path d="M10 8 V11 M8.5 9.5 H11.5" stroke="#6cbf6c" stroke-width="1"/></svg>
<div class="t" style="left:467px;top:106.84px;font-size:12px;line-height:14px;color:#111">Stĺpce/Zoskupiť</div>
<svg style="left:581px;top:108px" width="13" height="13" viewBox="0 0 13 13"><path d="M0.5 0.5 H10 L12.5 3 V12.5 H0.5 Z" fill="#e6e3f3" stroke="#b5b0d6" stroke-width="1"/><rect x="3" y="0.5" width="6" height="4" fill="#fff" stroke="#b5b0d6" stroke-width="0.8"/><rect x="2.5" y="7" width="8" height="5" fill="#fff" stroke="#b5b0d6" stroke-width="0.8"/></svg>
<svg style="left:451px;top:130px" width="13" height="12" viewBox="0 0 13 12"><path d="M0.5 1 H5 L6.5 2.5 H12.5 V11.5 H0.5 Z" fill="#f3cd7a" stroke="#c89b45" stroke-width="1"/><path d="M0.5 3.5 H12.5" stroke="#c89b45" stroke-width="0.8"/></svg>
<div class="t" style="left:467px;top:128.84px;font-size:12px;line-height:14px;color:#111">Zbaľ</div>
<div class="a" style="left:609px;top:80px;width:150px;height:22px;border:1px solid #bdbdbd;background:#fff"></div>
<div class="a" style="left:609px;top:101px;width:150px;height:23px;border:1px solid #bdbdbd;background:#fff"></div>
<svg style="left:614px;top:86px" width="11" height="11" viewBox="0 0 11 11"><circle cx="4.5" cy="4.5" r="3.8" fill="none" stroke="#9a9a9a" stroke-width="1"/><line x1="7.3" y1="7.3" x2="10" y2="10" stroke="#9a9a9a" stroke-width="1.2"/></svg>
<div class="t" style="left:627px;top:84.54px;font-size:12px;line-height:14px;color:#8a8a8a">Filter</div>
<div class="t" style="left:613px;top:104.84px;font-size:12px;line-height:14px;color:#111">Nevyradené</div>
<svg style="left:747px;top:109px" width="9" height="5" viewBox="0 0 9 5"><path d="M0 0 H9 L4.5 4.5 Z" fill="#b0b0b0"/></svg>
<div class="a" style="left:771px;top:80px;width:80px;height:22px;border:1px solid #bdbdbd;background:#fff"></div>
<div class="a" style="left:771px;top:101px;width:80px;height:23px;border:1px solid #bdbdbd;background:#fff"></div>
<div class="t" style="left:775px;top:83.64px;font-size:12px;line-height:14px;color:#111">31. 10. 2025</div>
<div class="t" style="left:775px;top:104.84px;font-size:12px;line-height:14px;color:#111">2025/2026</div>
<svg style="left:839px;top:109px" width="9" height="5" viewBox="0 0 9 5"><path d="M0 0 H9 L4.5 4.5 Z" fill="#b0b0b0"/></svg>
<svg style="left:874px;top:80px" width="34" height="34" viewBox="0 0 34 34"><circle cx="22.5" cy="13.5" r="10.5" fill="#d3ecfc" stroke="#7f94ab" stroke-width="1.3"/><path d="M14.8 21.2 L3.5 32.5" stroke="#8ea0b4" stroke-width="3.2" stroke-linecap="round"/><path d="M14.8 21.2 L3.5 32.5" stroke="#c7d3de" stroke-width="1.2" stroke-linecap="round"/></svg>
<div class="t" style="left:874px;top:118.14px;font-size:12px;line-height:14px;color:#111">Hľadať</div>
<div class="a" style="left:921px;top:77px;width:63px;height:75px;background:#fcebb2;border:1px solid #efc766;border-radius:3px"></div>
<svg style="left:938px;top:83px" width="31" height="31" viewBox="0 0 31 31"><rect x="6" y="0.5" width="18" height="8" fill="#fff" stroke="#6f86a6" stroke-width="1"/><rect x="0.7" y="7.8" width="29" height="16" rx="2" fill="#b5c4d6" stroke="#6f86a6" stroke-width="1"/><rect x="6" y="7.3" width="18" height="8.2" rx="1" fill="#8ab6ec" stroke="#6688b8" stroke-width="0.8"/><circle cx="26.5" cy="11.3" r="1" fill="#f7d774"/><path d="M3.5 19.5 H26.5" stroke="#6f86a6" stroke-width="1.6" stroke-linecap="round"/><rect x="6" y="19.8" width="18" height="9.6" fill="#fff" stroke="#6f86a6" stroke-width="1"/><path d="M10 22.8 H20 M10 26.5 H20" stroke="#a4b2c2" stroke-width="1"/></svg>
<div class="t" style="left:928px;top:118.14px;font-size:12px;line-height:14px;color:#111">Vytlačiť</div>
<svg style="left:972px;top:120px" width="10" height="8" viewBox="0 0 10 8"><path d="M0 0 H9.5 L4.75 8 Z" fill="#c5c5c5"/></svg>
<svg style="left:1009px;top:82px" width="33" height="33" viewBox="0 0 33 33"><path d="M14.5 17 L3 28.5 Q2.3 29.5 3.2 30.4 Q4 31.2 5 30.4 L6.5 29 L8.3 30.8 L10.8 28.3 L9 26.5 L10.3 25.2 L12 26.8 L14.2 24.6 L12.5 23 L17.5 18" fill="#ececec" stroke="#d2d2d2" stroke-width="1.2" stroke-linejoin="round"/><circle cx="21.5" cy="11" r="9.5" fill="#ececec" stroke="#d2d2d2" stroke-width="1.2"/><path d="M18 5.8 A6 6 0 0 1 26.7 14.5 Z" fill="#fff" stroke="#d6d6d6" stroke-width="1"/></svg>
<div class="t" style="left:1010px;top:118.14px;font-size:12px;line-height:14px;color:#a8a8a8">Konto</div>
<svg style="left:1085px;top:83px" width="31" height="31" viewBox="0 0 31 31"><circle cx="15" cy="15" r="14.6" fill="#88b2ea" stroke="#6890cc" stroke-width="1"/></svg>
<div class="t" style="left:1040.0px;width:120px;text-align:center;top:84.88px;font-size:24px;line-height:28px;color:#fff">?</div>
<div class="t" style="left:1040.0px;width:120px;text-align:center;top:115.38px;font-size:9px;line-height:14px;color:#222">Otázky?</div>
<div class="t" style="left:1040.0px;width:120px;text-align:center;top:125.98px;font-size:9px;line-height:14px;color:#222">Problém?</div>
<div class="t" style="left:1040.0px;width:120px;text-align:center;top:136.58px;font-size:9px;line-height:14px;color:#222">Napíšte nám.</div>
<div class="a" style="left:246px;top:158px;width:1058px;height:61px;background:#2d6fa5"></div>
<div class="a" style="left:269px;top:158px;width:1px;height:61px;background:#c9c9c9"></div>
<div class="a" style="left:299px;top:158px;width:1px;height:61px;background:#c9c9c9"></div>
<div class="a" style="left:373px;top:158px;width:1px;height:61px;background:#c9c9c9"></div>
<div class="a" style="left:462px;top:158px;width:1px;height:61px;background:#c9c9c9"></div>
<div class="a" style="left:604px;top:158px;width:1px;height:61px;background:#c9c9c9"></div>
<div class="a" style="left:658px;top:158px;width:1px;height:61px;background:#c9c9c9"></div>
<div class="a" style="left:712px;top:158px;width:1px;height:61px;background:#c9c9c9"></div>
<div class="a" style="left:836px;top:158px;width:1px;height:61px;background:#c9c9c9"></div>
<div class="a" style="left:897px;top:158px;width:1px;height:61px;background:#c9c9c9"></div>
<div class="a" style="left:966px;top:158px;width:1px;height:61px;background:#c9c9c9"></div>
<div class="a" style="left:1089px;top:158px;width:1px;height:61px;background:#c9c9c9"></div>
<div class="a" style="left:1186px;top:158px;width:1px;height:61px;background:#c9c9c9"></div>
<div class="t" style="left:307px;top:167.84px;font-size:12px;line-height:14px;color:#fff;font-weight:bold;letter-spacing:0.12px">Číslo</div>
<div class="t" style="left:381px;top:167.84px;font-size:12px;line-height:14px;color:#fff;font-weight:bold;letter-spacing:0.12px">Inventár</div>
<div class="t" style="left:470px;top:167.84px;font-size:12px;line-height:14px;color:#fff;font-weight:bold;letter-spacing:0.12px">Názov</div>
<svg style="left:595px;top:172px" width="8" height="7" viewBox="0 0 8 7"><path d="M4 0 L8 6.5 H0 Z" fill="#fff"/></svg>
<div class="t r" style="left:531.2px;width:120px;top:167.84px;font-size:12px;line-height:14px;color:#fff;font-weight:bold;letter-spacing:0.12px">Počet</div>
<div class="t r" style="left:585.2px;width:120px;top:167.84px;font-size:12px;line-height:14px;color:#fff;font-weight:bold;letter-spacing:0.12px">Rok</div>
<div class="t" style="left:720px;top:167.84px;font-size:12px;line-height:14px;color:#fff;font-weight:bold;letter-spacing:0.12px">Zodpovedná osoba</div>
<div class="t r" style="left:770.2px;width:120px;top:167.84px;font-size:12px;line-height:14px;color:#fff;font-weight:bold;letter-spacing:0.12px">Cena</div>
<div class="t" style="left:905px;top:167.84px;width:60px;overflow:hidden;color:#fff;font-weight:bold;letter-spacing:0.12px">Celková cena</div>
<div class="t" style="left:974px;top:167.84px;width:114px;overflow:hidden;color:#fff;font-weight:bold;letter-spacing:0.12px">Dátum nadobudnutia</div>
<div class="t" style="left:1097px;top:167.84px;font-size:12px;line-height:14px;color:#fff;font-weight:bold;letter-spacing:0.12px">Výrobné číslo</div>
<div class="t" style="left:1195px;top:167.84px;width:109px;overflow:hidden;color:#fff;font-weight:bold;letter-spacing:0.12px">Spôsob nadobudnutia</div>
<div class="a" style="left:308px;top:192px;width:54px;height:20px;background:#fff;border:1px solid #d9d4d0"></div>
<svg style="left:312px;top:197px" width="10" height="10" viewBox="0 0 10 10"><path d="M0 0 H10 L6 4.5 V10 L4 8.5 V4.5 Z" fill="#c8c8c8"/></svg>
<svg style="left:351px;top:200px" width="8" height="4" viewBox="0 0 8 4"><path d="M0 0 H8 L4 4 Z" fill="#b3b3b3"/></svg>
<div class="a" style="left:382px;top:192px;width:69px;height:20px;background:#ffff00;border:1px solid #d9d4d0"></div>
<div class="t" style="left:386px;top:194.84px;font-size:12px;line-height:14px;font-weight:bold;color:#111">Nábyt...</div>
<svg style="left:440px;top:200px" width="8" height="4" viewBox="0 0 8 4"><path d="M0 0 H8 L4 4 Z" fill="#b3b3b3"/></svg>
<div class="a" style="left:471px;top:192px;width:122px;height:20px;background:#fff;border:1px solid #d9d4d0"></div>
<svg style="left:475px;top:197px" width="10" height="10" viewBox="0 0 10 10"><path d="M0 0 H10 L6 4.5 V10 L4 8.5 V4.5 Z" fill="#c8c8c8"/></svg>
<svg style="left:582px;top:200px" width="8" height="4" viewBox="0 0 8 4"><path d="M0 0 H8 L4 4 Z" fill="#b3b3b3"/></svg>
<div class="a" style="left:613px;top:192px;width:34px;height:20px;background:#fff;border:1px solid #d9d4d0"></div>
<svg style="left:617px;top:197px" width="10" height="10" viewBox="0 0 10 10"><path d="M0 0 H10 L6 4.5 V10 L4 8.5 V4.5 Z" fill="#c8c8c8"/></svg>
<svg style="left:636px;top:200px" width="8" height="4" viewBox="0 0 8 4"><path d="M0 0 H8 L4 4 Z" fill="#b3b3b3"/></svg>
<div class="a" style="left:667px;top:192px;width:34px;height:20px;background:#fff;border:1px solid #d9d4d0"></div>
<svg style="left:671px;top:197px" width="10" height="10" viewBox="0 0 10 10"><path d="M0 0 H10 L6 4.5 V10 L4 8.5 V4.5 Z" fill="#c8c8c8"/></svg>
<svg style="left:690px;top:200px" width="8" height="4" viewBox="0 0 8 4"><path d="M0 0 H8 L4 4 Z" fill="#b3b3b3"/></svg>
<div class="a" style="left:721px;top:192px;width:104px;height:20px;background:#fff;border:1px solid #d9d4d0"></div>
<svg style="left:725px;top:197px" width="10" height="10" viewBox="0 0 10 10"><path d="M0 0 H10 L6 4.5 V10 L4 8.5 V4.5 Z" fill="#c8c8c8"/></svg>
<svg style="left:814px;top:200px" width="8" height="4" viewBox="0 0 8 4"><path d="M0 0 H8 L4 4 Z" fill="#b3b3b3"/></svg>
<div class="a" style="left:1195px;top:192px;width:120px;height:20px;background:#fff;border:1px solid #d9d4d0"></div>
<svg style="left:1199px;top:197px" width="10" height="10" viewBox="0 0 10 10"><path d="M0 0 H10 L6 4.5 V10 L4 8.5 V4.5 Z" fill="#c8c8c8"/></svg>
<div class="a" style="left:1304px;top:158px;width:6px;height:61px;background:#fff;border-left:1px solid #6f6f6f"></div>
<div class="a" style="left:246px;top:219px;width:1044px;height:855px;overflow:hidden;background:#fafafa">
<div class="a" style="left:24px;top:-13px;width:1020px;height:2px;background:#b9b9b9"></div>
<div class="a" style="left:0px;top:-13px;width:23px;height:2px;background:#dfe2fc"></div>
<div class="a" style="left:23px;top:-13px;width:1px;height:2px;background:#d0e6f9"></div>
<div class="a" style="left:24px;top:-11px;width:1020px;height:33px;background:#fafafa"></div>
<div class="a" style="left:0px;top:-11px;width:23px;height:33px;background:#dfe2fc"></div>
<div class="a" style="left:23px;top:-11px;width:1px;height:33px;background:#d0e6f9"></div>
<div class="a" style="left:358px;top:-11px;width:1px;height:33px;background:#d0e6f9"></div>
<div class="a" style="left:412px;top:-11px;width:1px;height:33px;background:#d0e6f9"></div>
<div class="a" style="left:651px;top:-11px;width:1px;height:33px;background:#d0e6f9"></div>
<div class="a" style="left:720px;top:-11px;width:1px;height:33px;background:#d0e6f9"></div>
<div class="a" style="left:0px;top:22px;width:1044px;height:1px;background:#d0e6f9"></div>
<div class="t" style="left:31px;top:-1.16px;">Celkom</div>
<div class="t r" style="left:254.8px;width:150px;top:-1.16px;">33</div>
<div class="t r" style="left:562.8px;width:150px;top:-1.16px;">2190.00</div>
<div class="a" style="left:0px;top:23px;width:1044px;height:33px;background:#dfe2fc"></div>
<div class="a" style="left:0px;top:56px;width:1044px;height:1px;background:#d0e6f9"></div>
<div class="a" style="left:4px;top:32px;width:16px;height:15px;border-radius:4px;border:1px solid #f6f6fc;border-right-color:#66666e;border-bottom-color:#66666e"></div>
<div class="a" style="left:10px;top:38px;width:5px;height:1px;background:#111"></div>
<div class="t" style="left:30px;top:31.84px;">Učebňa: K2</div>
<div class="t" style="left:1029px;top:31.84px;">počet: 5</div>
<div class="a" style="left:24px;top:57px;width:1020px;height:33px;background:#fafafa"></div>
<div class="a" style="left:0px;top:57px;width:23px;height:33px;background:#dfe2fc"></div>
<div class="a" style="left:23px;top:57px;width:1px;height:33px;background:#d0e6f9"></div>
<div class="a" style="left:53px;top:57px;width:1px;height:33px;background:#d0e6f9"></div>
<div class="a" style="left:127px;top:57px;width:1px;height:33px;background:#d0e6f9"></div>
<div class="a" style="left:216px;top:57px;width:1px;height:33px;background:#d0e6f9"></div>
<div class="a" style="left:358px;top:57px;width:1px;height:33px;background:#d0e6f9"></div>
<div class="a" style="left:412px;top:57px;width:1px;height:33px;background:#d0e6f9"></div>
<div class="a" style="left:466px;top:57px;width:1px;height:33px;background:#d0e6f9"></div>
<div class="a" style="left:590px;top:57px;width:1px;height:33px;background:#d0e6f9"></div>
<div class="a" style="left:651px;top:57px;width:1px;height:33px;background:#d0e6f9"></div>
<div class="a" style="left:720px;top:57px;width:1px;height:33px;background:#d0e6f9"></div>
<div class="a" style="left:843px;top:57px;width:1px;height:33px;background:#d0e6f9"></div>
<div class="a" style="left:940px;top:57px;width:1px;height:33px;background:#d0e6f9"></div>
<div class="a" style="left:0px;top:90px;width:1044px;height:1px;background:#d0e6f9"></div>
<svg style="left:31px;top:66px" width="17" height="16" viewBox="0 0 17 16"><rect x="3.5" y="0.5" width="9" height="6.5" fill="#c3e6fb" stroke="#7f96b4" stroke-width="1"/><rect x="6.3" y="7" width="3.4" height="1.2" fill="#6f88a8"/><rect x="0.3" y="8.2" width="15.4" height="1.6" fill="#e3bd70" stroke="#c9a055" stroke-width="0.6"/><rect x="1.6" y="9.8" width="1.7" height="6" fill="#ebc373"/><rect x="12.7" y="9.8" width="1.7" height="6" fill="#ebc373"/><rect x="3.3" y="12.2" width="9.4" height="1.3" fill="#e6dfd2"/></svg>
<div class="t" style="left:61px;top:66.84px;">007</div>
<div class="t" style="left:135px;top:66.84px;">Nábytok</div>
<div class="t" style="left:224px;top:66.84px;">andy stolička detská</div>
<div class="t r" style="left:254.8px;width:150px;top:66.84px;">1</div>
<div class="t r" style="left:308.8px;width:150px;top:66.84px;">2025</div>
<div class="t" style="left:474px;top:66.84px;">Učiteľ 05</div>
<div class="t r" style="left:493.8px;width:150px;top:66.84px;">50.00</div>
<div class="t r" style="left:562.8px;width:150px;top:66.84px;">50.00</div>
<div class="t" style="left:728px;top:66.84px;">04. 03. 2025</div>
<div class="t" style="left:851px;top:66.84px;"></div>
<div class="t" style="left:948px;top:66.84px;">kúpa</div>
<div class="a" style="left:24px;top:91px;width:1020px;height:33px;background:#ffffff"></div>
<div class="a" style="left:0px;top:91px;width:23px;height:33px;background:#dfe2fc"></div>
<div class="a" style="left:23px;top:91px;width:1px;height:33px;background:#d0e6f9"></div>
<div class="a" style="left:53px;top:91px;width:1px;height:33px;background:#d0e6f9"></div>
<div class="a" style="left:127px;top:91px;width:1px;height:33px;background:#d0e6f9"></div>
<div class="a" style="left:216px;top:91px;width:1px;height:33px;background:#d0e6f9"></div>
<div class="a" style="left:358px;top:91px;width:1px;height:33px;background:#d0e6f9"></div>
<div class="a" style="left:412px;top:91px;width:1px;height:33px;background:#d0e6f9"></div>
<div class="a" style="left:466px;top:91px;width:1px;height:33px;background:#d0e6f9"></div>
<div class="a" style="left:590px;top:91px;width:1px;height:33px;background:#d0e6f9"></div>
<div class="a" style="left:651px;top:91px;width:1px;height:33px;background:#d0e6f9"></div>
<div class="a" style="left:720px;top:91px;width:1px;height:33px;background:#d0e6f9"></div>
<div class="a" style="left:843px;top:91px;width:1px;height:33px;background:#d0e6f9"></div>
<div class="a" style="left:940px;top:91px;width:1px;height:33px;background:#d0e6f9"></div>
<div class="a" style="left:0px;top:124px;width:1044px;height:1px;background:#d0e6f9"></div>
<svg style="left:31px;top:100px" width="17" height="16" viewBox="0 0 17 16"><rect x="3.5" y="0.5" width="9" height="6.5" fill="#c3e6fb" stroke="#7f96b4" stroke-width="1"/><rect x="6.3" y="7" width="3.4" height="1.2" fill="#6f88a8"/><rect x="0.3" y="8.2" width="15.4" height="1.6" fill="#e3bd70" stroke="#c9a055" stroke-width="0.6"/><rect x="1.6" y="9.8" width="1.7" height="6" fill="#ebc373"/><rect x="12.7" y="9.8" width="1.7" height="6" fill="#ebc373"/><rect x="3.3" y="12.2" width="9.4" height="1.3" fill="#e6dfd2"/></svg>
<div class="t" style="left:61px;top:100.84px;">008</div>
<div class="t" style="left:135px;top:100.84px;">Nábytok</div>
<div class="t" style="left:224px;top:100.84px;">bety stolička detská</div>
<div class="t r" style="left:254.8px;width:150px;top:100.84px;">1</div>
<div class="t r" style="left:308.8px;width:150px;top:100.84px;">2025</div>
<div class="t" style="left:474px;top:100.84px;">Učiteľ 05</div>
<div class="t r" style="left:493.8px;width:150px;top:100.84px;">50.00</div>
<div class="t r" style="left:562.8px;width:150px;top:100.84px;">50.00</div>
<div class="t" style="left:728px;top:100.84px;">04. 03. 2025</div>
<div class="t" style="left:851px;top:100.84px;"></div>
<div class="t" style="left:948px;top:100.84px;">kúpa</div>
<div class="a" style="left:24px;top:125px;width:1020px;height:33px;background:#fafafa"></div>
<div class="a" style="left:0px;top:125px;width:23px;height:33px;background:#dfe2fc"></div>
<div class="a" style="left:23px;top:125px;width:1px;height:33px;background:#d0e6f9"></div>
<div class="a" style="left:53px;top:125px;width:1px;height:33px;background:#d0e6f9"></div>
<div class="a" style="left:127px;top:125px;width:1px;height:33px;background:#d0e6f9"></div>
<div class="a" style="left:216px;top:125px;width:1px;height:33px;background:#d0e6f9"></div>
<div class="a" style="left:358px;top:125px;width:1px;height:33px;background:#d0e6f9"></div>
<div class="a" style="left:412px;top:125px;width:1px;height:33px;background:#d0e6f9"></div>
<div class="a" style="left:466px;top:125px;width:1px;height:33px;background:#d0e6f9"></div>
<div class="a" style="left:590px;top:125px;width:1px;height:33px;background:#d0e6f9"></div>
<div class="a" style="left:651px;top:125px;width:1px;height:33px;background:#d0e6f9"></div>
<div class="a" style="left:720px;top:125px;width:1px;height:33px;background:#d0e6f9"></div>
<div class="a" style="left:843px;top:125px;width:1px;height:33px;background:#d0e6f9"></div>
<div class="a" style="left:940px;top:125px;width:1px;height:33px;background:#d0e6f9"></div>
<div class="a" style="left:0px;top:158px;width:1044px;height:1px;background:#d0e6f9"></div>
<svg style="left:31px;top:134px" width="17" height="16" viewBox="0 0 17 16"><rect x="3.5" y="0.5" width="9" height="6.5" fill="#c3e6fb" stroke="#7f96b4" stroke-width="1"/><rect x="6.3" y="7" width="3.4" height="1.2" fill="#6f88a8"/><rect x="0.3" y="8.2" width="15.4" height="1.6" fill="#e3bd70" stroke="#c9a055" stroke-width="0.6"/><rect x="1.6" y="9.8" width="1.7" height="6" fill="#ebc373"/><rect x="12.7" y="9.8" width="1.7" height="6" fill="#ebc373"/><rect x="3.3" y="12.2" width="9.4" height="1.3" fill="#e6dfd2"/></svg>
<div class="t" style="left:61px;top:134.84px;">006</div>
<div class="t" style="left:135px;top:134.84px;">Nábytok</div>
<div class="t" style="left:224px;top:134.84px;">cecil stolička detská</div>
<div class="t r" style="left:254.8px;width:150px;top:134.84px;">1</div>
<div class="t r" style="left:308.8px;width:150px;top:134.84px;">2025</div>
<div class="t" style="left:474px;top:134.84px;">Učiteľ 05</div>
<div class="t r" style="left:493.8px;width:150px;top:134.84px;">50.00</div>
<div class="t r" style="left:562.8px;width:150px;top:134.84px;">50.00</div>
<div class="t" style="left:728px;top:134.84px;">04. 03. 2025</div>
<div class="t" style="left:851px;top:134.84px;"></div>
<div class="t" style="left:948px;top:134.84px;">kúpa</div>
<div class="a" style="left:24px;top:159px;width:1020px;height:33px;background:#ffffff"></div>
<div class="a" style="left:0px;top:159px;width:23px;height:33px;background:#dfe2fc"></div>
<div class="a" style="left:23px;top:159px;width:1px;height:33px;background:#d0e6f9"></div>
<div class="a" style="left:53px;top:159px;width:1px;height:33px;background:#d0e6f9"></div>
<div class="a" style="left:127px;top:159px;width:1px;height:33px;background:#d0e6f9"></div>
<div class="a" style="left:216px;top:159px;width:1px;height:33px;background:#d0e6f9"></div>
<div class="a" style="left:358px;top:159px;width:1px;height:33px;background:#d0e6f9"></div>
<div class="a" style="left:412px;top:159px;width:1px;height:33px;background:#d0e6f9"></div>
<div class="a" style="left:466px;top:159px;width:1px;height:33px;background:#d0e6f9"></div>
<div class="a" style="left:590px;top:159px;width:1px;height:33px;background:#d0e6f9"></div>
<div class="a" style="left:651px;top:159px;width:1px;height:33px;background:#d0e6f9"></div>
<div class="a" style="left:720px;top:159px;width:1px;height:33px;background:#d0e6f9"></div>
<div class="a" style="left:843px;top:159px;width:1px;height:33px;background:#d0e6f9"></div>
<div class="a" style="left:940px;top:159px;width:1px;height:33px;background:#d0e6f9"></div>
<div class="a" style="left:0px;top:192px;width:1044px;height:1px;background:#d0e6f9"></div>
<svg style="left:31px;top:168px" width="17" height="16" viewBox="0 0 17 16"><rect x="3.5" y="0.5" width="9" height="6.5" fill="#c3e6fb" stroke="#7f96b4" stroke-width="1"/><rect x="6.3" y="7" width="3.4" height="1.2" fill="#6f88a8"/><rect x="0.3" y="8.2" width="15.4" height="1.6" fill="#e3bd70" stroke="#c9a055" stroke-width="0.6"/><rect x="1.6" y="9.8" width="1.7" height="6" fill="#ebc373"/><rect x="12.7" y="9.8" width="1.7" height="6" fill="#ebc373"/><rect x="3.3" y="12.2" width="9.4" height="1.3" fill="#e6dfd2"/></svg>
<div class="t" style="left:61px;top:168.84px;">002</div>
<div class="t" style="left:135px;top:168.84px;">Nábytok</div>
<div class="t" style="left:224px;top:168.84px;">Stôl 1600x800x700</div>
<div class="t r" style="left:254.8px;width:150px;top:168.84px;">1</div>
<div class="t r" style="left:308.8px;width:150px;top:168.84px;">2025</div>
<div class="t" style="left:474px;top:168.84px;">Učiteľ 05</div>
<div class="t r" style="left:493.8px;width:150px;top:168.84px;">320.00</div>
<div class="t r" style="left:562.8px;width:150px;top:168.84px;">320.00</div>
<div class="t" style="left:728px;top:168.84px;">04. 03. 2025</div>
<div class="t" style="left:851px;top:168.84px;">STL 00001</div>
<div class="t" style="left:948px;top:168.84px;">kúpa</div>
<div class="a" style="left:24px;top:193px;width:1020px;height:33px;background:#fafafa"></div>
<div class="a" style="left:0px;top:193px;width:23px;height:33px;background:#dfe2fc"></div>
<div class="a" style="left:23px;top:193px;width:1px;height:33px;background:#d0e6f9"></div>
<div class="a" style="left:53px;top:193px;width:1px;height:33px;background:#d0e6f9"></div>
<div class="a" style="left:127px;top:193px;width:1px;height:33px;background:#d0e6f9"></div>
<div class="a" style="left:216px;top:193px;width:1px;height:33px;background:#d0e6f9"></div>
<div class="a" style="left:358px;top:193px;width:1px;height:33px;background:#d0e6f9"></div>
<div class="a" style="left:412px;top:193px;width:1px;height:33px;background:#d0e6f9"></div>
<div class="a" style="left:466px;top:193px;width:1px;height:33px;background:#d0e6f9"></div>
<div class="a" style="left:590px;top:193px;width:1px;height:33px;background:#d0e6f9"></div>
<div class="a" style="left:651px;top:193px;width:1px;height:33px;background:#d0e6f9"></div>
<div class="a" style="left:720px;top:193px;width:1px;height:33px;background:#d0e6f9"></div>
<div class="a" style="left:843px;top:193px;width:1px;height:33px;background:#d0e6f9"></div>
<div class="a" style="left:940px;top:193px;width:1px;height:33px;background:#d0e6f9"></div>
<div class="a" style="left:0px;top:226px;width:1044px;height:1px;background:#d0e6f9"></div>
<svg style="left:31px;top:202px" width="17" height="16" viewBox="0 0 17 16"><rect x="3.5" y="0.5" width="9" height="6.5" fill="#c3e6fb" stroke="#7f96b4" stroke-width="1"/><rect x="6.3" y="7" width="3.4" height="1.2" fill="#6f88a8"/><rect x="0.3" y="8.2" width="15.4" height="1.6" fill="#e3bd70" stroke="#c9a055" stroke-width="0.6"/><rect x="1.6" y="9.8" width="1.7" height="6" fill="#ebc373"/><rect x="12.7" y="9.8" width="1.7" height="6" fill="#ebc373"/><rect x="3.3" y="12.2" width="9.4" height="1.3" fill="#e6dfd2"/></svg>
<div class="t" style="left:61px;top:202.84px;">001</div>
<div class="t" style="left:135px;top:202.84px;">Nábytok</div>
<div class="t" style="left:224px;top:202.84px;">Stôl 1600x800x700</div>
<div class="t r" style="left:254.8px;width:150px;top:202.84px;">1</div>
<div class="t r" style="left:308.8px;width:150px;top:202.84px;">2025</div>
<div class="t" style="left:474px;top:202.84px;">Učiteľ 05</div>
<div class="t r" style="left:493.8px;width:150px;top:202.84px;">320.00</div>
<div class="t r" style="left:562.8px;width:150px;top:202.84px;">320.00</div>
<div class="t" style="left:728px;top:202.84px;">04. 03. 2025</div>
<div class="t" style="left:851px;top:202.84px;">STL 00001</div>
<div class="t" style="left:948px;top:202.84px;">kúpa</div>
<div class="a" style="left:24px;top:227px;width:1020px;height:2px;background:#b9b9b9"></div>
<div class="a" style="left:0px;top:227px;width:23px;height:2px;background:#dfe2fc"></div>
<div class="a" style="left:23px;top:227px;width:1px;height:2px;background:#d0e6f9"></div>
<div class="a" style="left:24px;top:229px;width:1020px;height:33px;background:#ffffff"></div>
<div class="a" style="left:0px;top:229px;width:23px;height:33px;background:#dfe2fc"></div>
<div class="a" style="left:23px;top:229px;width:1px;height:33px;background:#d0e6f9"></div>
<div class="a" style="left:358px;top:229px;width:1px;height:33px;background:#d0e6f9"></div>
<div class="a" style="left:412px;top:229px;width:1px;height:33px;background:#d0e6f9"></div>
<div class="a" style="left:651px;top:229px;width:1px;height:33px;background:#d0e6f9"></div>
<div class="a" style="left:720px;top:229px;width:1px;height:33px;background:#d0e6f9"></div>
<div class="a" style="left:0px;top:262px;width:1044px;height:1px;background:#d0e6f9"></div>
<div class="t" style="left:31px;top:238.84px;">Celkom</div>
<div class="t r" style="left:254.8px;width:150px;top:238.84px;">5</div>
<div class="t r" style="left:562.8px;width:150px;top:238.84px;">790.00</div>
<div class="a" style="left:0px;top:263px;width:1044px;height:33px;background:#dfe2fc"></div>
<div class="a" style="left:0px;top:296px;width:1044px;height:1px;background:#d0e6f9"></div>
<div class="a" style="left:4px;top:272px;width:16px;height:15px;border-radius:4px;border:1px solid #f6f6fc;border-right-color:#66666e;border-bottom-color:#66666e"></div>
<div class="a" style="left:10px;top:278px;width:5px;height:1px;background:#111"></div>
<div class="t" style="left:30px;top:271.84px;">Učebňa: K3</div>
<div class="t" style="left:1029px;top:271.84px;">počet: 3</div>
<div class="a" style="left:24px;top:297px;width:1020px;height:33px;background:#ffffff"></div>
<div class="a" style="left:0px;top:297px;width:23px;height:33px;background:#dfe2fc"></div>
<div class="a" style="left:23px;top:297px;width:1px;height:33px;background:#d0e6f9"></div>
<div class="a" style="left:53px;top:297px;width:1px;height:33px;background:#d0e6f9"></div>
<div class="a" style="left:127px;top:297px;width:1px;height:33px;background:#d0e6f9"></div>
<div class="a" style="left:216px;top:297px;width:1px;height:33px;background:#d0e6f9"></div>
<div class="a" style="left:358px;top:297px;width:1px;height:33px;background:#d0e6f9"></div>
<div class="a" style="left:412px;top:297px;width:1px;height:33px;background:#d0e6f9"></div>
<div class="a" style="left:466px;top:297px;width:1px;height:33px;background:#d0e6f9"></div>
<div class="a" style="left:590px;top:297px;width:1px;height:33px;background:#d0e6f9"></div>
<div class="a" style="left:651px;top:297px;width:1px;height:33px;background:#d0e6f9"></div>
<div class="a" style="left:720px;top:297px;width:1px;height:33px;background:#d0e6f9"></div>
<div class="a" style="left:843px;top:297px;width:1px;height:33px;background:#d0e6f9"></div>
<div class="a" style="left:940px;top:297px;width:1px;height:33px;background:#d0e6f9"></div>
<div class="a" style="left:0px;top:330px;width:1044px;height:1px;background:#d0e6f9"></div>
<svg style="left:31px;top:306px" width="17" height="16" viewBox="0 0 17 16"><rect x="3.5" y="0.5" width="9" height="6.5" fill="#c3e6fb" stroke="#7f96b4" stroke-width="1"/><rect x="6.3" y="7" width="3.4" height="1.2" fill="#6f88a8"/><rect x="0.3" y="8.2" width="15.4" height="1.6" fill="#e3bd70" stroke="#c9a055" stroke-width="0.6"/><rect x="1.6" y="9.8" width="1.7" height="6" fill="#ebc373"/><rect x="12.7" y="9.8" width="1.7" height="6" fill="#ebc373"/><rect x="3.3" y="12.2" width="9.4" height="1.3" fill="#e6dfd2"/></svg>
<div class="t" style="left:61px;top:306.84px;">110</div>
<div class="t" style="left:135px;top:306.84px;">Nábytok</div>
<div class="t" style="left:224px;top:306.84px;">anvir stolička</div>
<div class="t r" style="left:254.8px;width:150px;top:306.84px;">1</div>
<div class="t r" style="left:308.8px;width:150px;top:306.84px;">2025</div>
<div class="t" style="left:474px;top:306.84px;">Učiteľ 05</div>
<div class="t r" style="left:493.8px;width:150px;top:306.84px;">50.00</div>
<div class="t r" style="left:562.8px;width:150px;top:306.84px;">50.00</div>
<div class="t" style="left:728px;top:306.84px;">04. 03. 2025</div>
<div class="t" style="left:851px;top:306.84px;"></div>
<div class="t" style="left:948px;top:306.84px;">kúpa</div>
<div class="a" style="left:24px;top:331px;width:1020px;height:33px;background:#fafafa"></div>
<div class="a" style="left:0px;top:331px;width:23px;height:33px;background:#dfe2fc"></div>
<div class="a" style="left:23px;top:331px;width:1px;height:33px;background:#d0e6f9"></div>
<div class="a" style="left:53px;top:331px;width:1px;height:33px;background:#d0e6f9"></div>
<div class="a" style="left:127px;top:331px;width:1px;height:33px;background:#d0e6f9"></div>
<div class="a" style="left:216px;top:331px;width:1px;height:33px;background:#d0e6f9"></div>
<div class="a" style="left:358px;top:331px;width:1px;height:33px;background:#d0e6f9"></div>
<div class="a" style="left:412px;top:331px;width:1px;height:33px;background:#d0e6f9"></div>
<div class="a" style="left:466px;top:331px;width:1px;height:33px;background:#d0e6f9"></div>
<div class="a" style="left:590px;top:331px;width:1px;height:33px;background:#d0e6f9"></div>
<div class="a" style="left:651px;top:331px;width:1px;height:33px;background:#d0e6f9"></div>
<div class="a" style="left:720px;top:331px;width:1px;height:33px;background:#d0e6f9"></div>
<div class="a" style="left:843px;top:331px;width:1px;height:33px;background:#d0e6f9"></div>
<div class="a" style="left:940px;top:331px;width:1px;height:33px;background:#d0e6f9"></div>
<div class="a" style="left:0px;top:364px;width:1044px;height:1px;background:#d0e6f9"></div>
<svg style="left:31px;top:340px" width="17" height="16" viewBox="0 0 17 16"><rect x="3.5" y="0.5" width="9" height="6.5" fill="#c3e6fb" stroke="#7f96b4" stroke-width="1"/><rect x="6.3" y="7" width="3.4" height="1.2" fill="#6f88a8"/><rect x="0.3" y="8.2" width="15.4" height="1.6" fill="#e3bd70" stroke="#c9a055" stroke-width="0.6"/><rect x="1.6" y="9.8" width="1.7" height="6" fill="#ebc373"/><rect x="12.7" y="9.8" width="1.7" height="6" fill="#ebc373"/><rect x="3.3" y="12.2" width="9.4" height="1.3" fill="#e6dfd2"/></svg>
<div class="t" style="left:61px;top:340.84px;">25</div>
<div class="t" style="left:135px;top:340.84px;">Nábytok</div>
<div class="t" style="left:224px;top:340.84px;">Havo Stolička detská</div>
<div class="t r" style="left:254.8px;width:150px;top:340.84px;">21</div>
<div class="t r" style="left:308.8px;width:150px;top:340.84px;"></div>
<div class="t" style="left:474px;top:340.84px;">Učiteľ 03</div>
<div class="t r" style="left:493.8px;width:150px;top:340.84px;">30.00</div>
<div class="t r" style="left:562.8px;width:150px;top:340.84px;">630.00</div>
<div class="t" style="left:728px;top:340.84px;"></div>
<div class="t" style="left:851px;top:340.84px;"></div>
<div class="t" style="left:948px;top:340.84px;"></div>
<div class="a" style="left:24px;top:365px;width:1020px;height:33px;background:#ffffff"></div>
<div class="a" style="left:0px;top:365px;width:23px;height:33px;background:#dfe2fc"></div>
<div class="a" style="left:23px;top:365px;width:1px;height:33px;background:#d0e6f9"></div>
<div class="a" style="left:53px;top:365px;width:1px;height:33px;background:#d0e6f9"></div>
<div class="a" style="left:127px;top:365px;width:1px;height:33px;background:#d0e6f9"></div>
<div class="a" style="left:216px;top:365px;width:1px;height:33px;background:#d0e6f9"></div>
<div class="a" style="left:358px;top:365px;width:1px;height:33px;background:#d0e6f9"></div>
<div class="a" style="left:412px;top:365px;width:1px;height:33px;background:#d0e6f9"></div>
<div class="a" style="left:466px;top:365px;width:1px;height:33px;background:#d0e6f9"></div>
<div class="a" style="left:590px;top:365px;width:1px;height:33px;background:#d0e6f9"></div>
<div class="a" style="left:651px;top:365px;width:1px;height:33px;background:#d0e6f9"></div>
<div class="a" style="left:720px;top:365px;width:1px;height:33px;background:#d0e6f9"></div>
<div class="a" style="left:843px;top:365px;width:1px;height:33px;background:#d0e6f9"></div>
<div class="a" style="left:940px;top:365px;width:1px;height:33px;background:#d0e6f9"></div>
<div class="a" style="left:0px;top:398px;width:1044px;height:1px;background:#d0e6f9"></div>
<svg style="left:31px;top:374px" width="17" height="16" viewBox="0 0 17 16"><rect x="3.5" y="0.5" width="9" height="6.5" fill="#c3e6fb" stroke="#7f96b4" stroke-width="1"/><rect x="6.3" y="7" width="3.4" height="1.2" fill="#6f88a8"/><rect x="0.3" y="8.2" width="15.4" height="1.6" fill="#e3bd70" stroke="#c9a055" stroke-width="0.6"/><rect x="1.6" y="9.8" width="1.7" height="6" fill="#ebc373"/><rect x="12.7" y="9.8" width="1.7" height="6" fill="#ebc373"/><rect x="3.3" y="12.2" width="9.4" height="1.3" fill="#e6dfd2"/></svg>
<div class="t" style="left:61px;top:374.84px;">099</div>
<div class="t" style="left:135px;top:374.84px;">Nábytok</div>
<div class="t" style="left:224px;top:374.84px;">Stôl 1600x800x700</div>
<div class="t r" style="left:254.8px;width:150px;top:374.84px;">1</div>
<div class="t r" style="left:308.8px;width:150px;top:374.84px;">2025</div>
<div class="t" style="left:474px;top:374.84px;">Učiteľ 06</div>
<div class="t r" style="left:493.8px;width:150px;top:374.84px;">320.00</div>
<div class="t r" style="left:562.8px;width:150px;top:374.84px;">320.00</div>
<div class="t" style="left:728px;top:374.84px;">04. 03. 2025</div>
<div class="t" style="left:851px;top:374.84px;">STL 00001</div>
<div class="t" style="left:948px;top:374.84px;">kúpa</div>
<div class="a" style="left:24px;top:399px;width:1020px;height:2px;background:#b9b9b9"></div>
<div class="a" style="left:0px;top:399px;width:23px;height:2px;background:#dfe2fc"></div>
<div class="a" style="left:23px;top:399px;width:1px;height:2px;background:#d0e6f9"></div>
<div class="a" style="left:24px;top:401px;width:1020px;height:33px;background:#fafafa"></div>
<div class="a" style="left:0px;top:401px;width:23px;height:33px;background:#dfe2fc"></div>
<div class="a" style="left:23px;top:401px;width:1px;height:33px;background:#d0e6f9"></div>
<div class="a" style="left:358px;top:401px;width:1px;height:33px;background:#d0e6f9"></div>
<div class="a" style="left:412px;top:401px;width:1px;height:33px;background:#d0e6f9"></div>
<div class="a" style="left:651px;top:401px;width:1px;height:33px;background:#d0e6f9"></div>
<div class="a" style="left:720px;top:401px;width:1px;height:33px;background:#d0e6f9"></div>
<div class="a" style="left:0px;top:434px;width:1044px;height:1px;background:#d0e6f9"></div>
<div class="t" style="left:31px;top:410.84px;">Celkom</div>
<div class="t r" style="left:254.8px;width:150px;top:410.84px;">23</div>
<div class="t r" style="left:562.8px;width:150px;top:410.84px;">1000.00</div>
<div class="a" style="left:0px;top:435px;width:1044px;height:33px;background:#dfe2fc"></div>
<div class="a" style="left:0px;top:468px;width:1044px;height:1px;background:#d0e6f9"></div>
<div class="a" style="left:4px;top:444px;width:16px;height:15px;border-radius:4px;border:1px solid #f6f6fc;border-right-color:#66666e;border-bottom-color:#66666e"></div>
<div class="a" style="left:10px;top:450px;width:5px;height:1px;background:#111"></div>
<div class="t" style="left:30px;top:443.84px;">Učebňa: K5</div>
<div class="t" style="left:1029px;top:443.84px;">počet: 1</div>
<div class="a" style="left:24px;top:469px;width:1020px;height:33px;background:#fafafa"></div>
<div class="a" style="left:0px;top:469px;width:23px;height:33px;background:#dfe2fc"></div>
<div class="a" style="left:23px;top:469px;width:1px;height:33px;background:#d0e6f9"></div>
<div class="a" style="left:53px;top:469px;width:1px;height:33px;background:#d0e6f9"></div>
<div class="a" style="left:127px;top:469px;width:1px;height:33px;background:#d0e6f9"></div>
<div class="a" style="left:216px;top:469px;width:1px;height:33px;background:#d0e6f9"></div>
<div class="a" style="left:358px;top:469px;width:1px;height:33px;background:#d0e6f9"></div>
<div class="a" style="left:412px;top:469px;width:1px;height:33px;background:#d0e6f9"></div>
<div class="a" style="left:466px;top:469px;width:1px;height:33px;background:#d0e6f9"></div>
<div class="a" style="left:590px;top:469px;width:1px;height:33px;background:#d0e6f9"></div>
<div class="a" style="left:651px;top:469px;width:1px;height:33px;background:#d0e6f9"></div>
<div class="a" style="left:720px;top:469px;width:1px;height:33px;background:#d0e6f9"></div>
<div class="a" style="left:843px;top:469px;width:1px;height:33px;background:#d0e6f9"></div>
<div class="a" style="left:940px;top:469px;width:1px;height:33px;background:#d0e6f9"></div>
<div class="a" style="left:0px;top:502px;width:1044px;height:1px;background:#d0e6f9"></div>
<svg style="left:31px;top:478px" width="17" height="16" viewBox="0 0 17 16"><rect x="3.5" y="0.5" width="9" height="6.5" fill="#c3e6fb" stroke="#7f96b4" stroke-width="1"/><rect x="6.3" y="7" width="3.4" height="1.2" fill="#6f88a8"/><rect x="0.3" y="8.2" width="15.4" height="1.6" fill="#e3bd70" stroke="#c9a055" stroke-width="0.6"/><rect x="1.6" y="9.8" width="1.7" height="6" fill="#ebc373"/><rect x="12.7" y="9.8" width="1.7" height="6" fill="#ebc373"/><rect x="3.3" y="12.2" width="9.4" height="1.3" fill="#e6dfd2"/></svg>
<div class="t" style="left:61px;top:478.84px;">27</div>
<div class="t" style="left:135px;top:478.84px;">Nábytok</div>
<div class="t" style="left:224px;top:478.84px;">Stolička detská Havo</div>
<div class="t r" style="left:254.8px;width:150px;top:478.84px;">18</div>
<div class="t r" style="left:308.8px;width:150px;top:478.84px;"></div>
<div class="t" style="left:474px;top:478.84px;">Učiteľ 05</div>
<div class="t r" style="left:493.8px;width:150px;top:478.84px;">30.00</div>
<div class="t r" style="left:562.8px;width:150px;top:478.84px;">540.00</div>
<div class="t" style="left:728px;top:478.84px;"></div>
<div class="t" style="left:851px;top:478.84px;"></div>
<div class="t" style="left:948px;top:478.84px;"></div>
<div class="a" style="left:24px;top:503px;width:1020px;height:2px;background:#b9b9b9"></div>
<div class="a" style="left:0px;top:503px;width:23px;height:2px;background:#dfe2fc"></div>
<div class="a" style="left:23px;top:503px;width:1px;height:2px;background:#d0e6f9"></div>
<div class="a" style="left:24px;top:505px;width:1020px;height:33px;background:#ffffff"></div>
<div class="a" style="left:0px;top:505px;width:23px;height:33px;background:#dfe2fc"></div>
<div class="a" style="left:23px;top:505px;width:1px;height:33px;background:#d0e6f9"></div>
<div class="a" style="left:358px;top:505px;width:1px;height:33px;background:#d0e6f9"></div>
<div class="a" style="left:412px;top:505px;width:1px;height:33px;background:#d0e6f9"></div>
<div class="a" style="left:651px;top:505px;width:1px;height:33px;background:#d0e6f9"></div>
<div class="a" style="left:720px;top:505px;width:1px;height:33px;background:#d0e6f9"></div>
<div class="a" style="left:0px;top:538px;width:1044px;height:1px;background:#d0e6f9"></div>
<div class="t" style="left:31px;top:514.84px;">Celkom</div>
<div class="t r" style="left:254.8px;width:150px;top:514.84px;">18</div>
<div class="t r" style="left:562.8px;width:150px;top:514.84px;">540.00</div>
<div class="a" style="left:0px;top:539px;width:1044px;height:33px;background:#dfe2fc"></div>
<div class="a" style="left:0px;top:572px;width:1044px;height:1px;background:#d0e6f9"></div>
<div class="a" style="left:4px;top:548px;width:16px;height:15px;border-radius:4px;border:1px solid #f6f6fc;border-right-color:#66666e;border-bottom-color:#66666e"></div>
<div class="a" style="left:10px;top:554px;width:5px;height:1px;background:#111"></div>
<div class="t" style="left:30px;top:547.84px;">Učebňa: K7</div>
<div class="t" style="left:1022px;top:547.84px;">počet: 12</div>
<div class="a" style="left:24px;top:573px;width:1020px;height:38px;background:#ffffff"></div>
<div class="a" style="left:0px;top:573px;width:23px;height:38px;background:#dfe2fc"></div>
<div class="a" style="left:23px;top:573px;width:1px;height:38px;background:#d0e6f9"></div>
<div class="a" style="left:53px;top:573px;width:1px;height:38px;background:#d0e6f9"></div>
<div class="a" style="left:127px;top:573px;width:1px;height:38px;background:#d0e6f9"></div>
<div class="a" style="left:216px;top:573px;width:1px;height:38px;background:#d0e6f9"></div>
<div class="a" style="left:358px;top:573px;width:1px;height:38px;background:#d0e6f9"></div>
<div class="a" style="left:412px;top:573px;width:1px;height:38px;background:#d0e6f9"></div>
<div class="a" style="left:466px;top:573px;width:1px;height:38px;background:#d0e6f9"></div>
<div class="a" style="left:590px;top:573px;width:1px;height:38px;background:#d0e6f9"></div>
<div class="a" style="left:651px;top:573px;width:1px;height:38px;background:#d0e6f9"></div>
<div class="a" style="left:720px;top:573px;width:1px;height:38px;background:#d0e6f9"></div>
<div class="a" style="left:843px;top:573px;width:1px;height:38px;background:#d0e6f9"></div>
<div class="a" style="left:940px;top:573px;width:1px;height:38px;background:#d0e6f9"></div>
<div class="a" style="left:0px;top:611px;width:1044px;height:1px;background:#d0e6f9"></div>
<svg style="left:31px;top:585px" width="17" height="16" viewBox="0 0 17 16"><rect x="3.5" y="0.5" width="9" height="6.5" fill="#c3e6fb" stroke="#7f96b4" stroke-width="1"/><rect x="6.3" y="7" width="3.4" height="1.2" fill="#6f88a8"/><rect x="0.3" y="8.2" width="15.4" height="1.6" fill="#e3bd70" stroke="#c9a055" stroke-width="0.6"/><rect x="1.6" y="9.8" width="1.7" height="6" fill="#ebc373"/><rect x="12.7" y="9.8" width="1.7" height="6" fill="#ebc373"/><rect x="3.3" y="12.2" width="9.4" height="1.3" fill="#e6dfd2"/></svg>
<div class="t" style="left:61px;top:584.84px;">25103009</div>
<div class="t" style="left:135px;top:584.84px;">Nábytok</div>
<div class="t" style="left:224px;top:577.54px;line-height:14px">antikoro skrinka<br>dverová s policou</div>
<div class="t r" style="left:254.8px;width:150px;top:584.84px;">3</div>
<div class="t r" style="left:308.8px;width:150px;top:584.84px;"></div>
<div class="t" style="left:474px;top:584.84px;">Učiteľ 05</div>
<div class="t r" style="left:493.8px;width:150px;top:584.84px;"></div>
<div class="t r" style="left:562.8px;width:150px;top:584.84px;"></div>
<div class="t" style="left:728px;top:584.84px;"></div>
<div class="t" style="left:851px;top:584.84px;"></div>
<div class="t" style="left:948px;top:584.84px;">kúpa</div>
<div class="a" style="left:24px;top:612px;width:1020px;height:38px;background:#fafafa"></div>
<div class="a" style="left:0px;top:612px;width:23px;height:38px;background:#dfe2fc"></div>
<div class="a" style="left:23px;top:612px;width:1px;height:38px;background:#d0e6f9"></div>
<div class="a" style="left:53px;top:612px;width:1px;height:38px;background:#d0e6f9"></div>
<div class="a" style="left:127px;top:612px;width:1px;height:38px;background:#d0e6f9"></div>
<div class="a" style="left:216px;top:612px;width:1px;height:38px;background:#d0e6f9"></div>
<div class="a" style="left:358px;top:612px;width:1px;height:38px;background:#d0e6f9"></div>
<div class="a" style="left:412px;top:612px;width:1px;height:38px;background:#d0e6f9"></div>
<div class="a" style="left:466px;top:612px;width:1px;height:38px;background:#d0e6f9"></div>
<div class="a" style="left:590px;top:612px;width:1px;height:38px;background:#d0e6f9"></div>
<div class="a" style="left:651px;top:612px;width:1px;height:38px;background:#d0e6f9"></div>
<div class="a" style="left:720px;top:612px;width:1px;height:38px;background:#d0e6f9"></div>
<div class="a" style="left:843px;top:612px;width:1px;height:38px;background:#d0e6f9"></div>
<div class="a" style="left:940px;top:612px;width:1px;height:38px;background:#d0e6f9"></div>
<div class="a" style="left:0px;top:650px;width:1044px;height:1px;background:#d0e6f9"></div>
<svg style="left:31px;top:624px" width="17" height="16" viewBox="0 0 17 16"><rect x="3.5" y="0.5" width="9" height="6.5" fill="#c3e6fb" stroke="#7f96b4" stroke-width="1"/><rect x="6.3" y="7" width="3.4" height="1.2" fill="#6f88a8"/><rect x="0.3" y="8.2" width="15.4" height="1.6" fill="#e3bd70" stroke="#c9a055" stroke-width="0.6"/><rect x="1.6" y="9.8" width="1.7" height="6" fill="#ebc373"/><rect x="12.7" y="9.8" width="1.7" height="6" fill="#ebc373"/><rect x="3.3" y="12.2" width="9.4" height="1.3" fill="#e6dfd2"/></svg>
<div class="t" style="left:61px;top:623.84px;">209</div>
<div class="t" style="left:135px;top:623.84px;">Nábytok</div>
<div class="t" style="left:224px;top:616.54px;line-height:14px">béžová stolička<br>učiteľská</div>
<div class="t r" style="left:254.8px;width:150px;top:623.84px;">1</div>
<div class="t r" style="left:308.8px;width:150px;top:623.84px;">2025</div>
<div class="t" style="left:474px;top:623.84px;">Učiteľ 05</div>
<div class="t r" style="left:493.8px;width:150px;top:623.84px;">97.00</div>
<div class="t r" style="left:562.8px;width:150px;top:623.84px;">97.00</div>
<div class="t" style="left:728px;top:623.84px;">21. 03. 2025</div>
<div class="t" style="left:851px;top:623.84px;"></div>
<div class="t" style="left:948px;top:623.84px;">kúpa</div>
<div class="a" style="left:24px;top:651px;width:1020px;height:38px;background:#ffffff"></div>
<div class="a" style="left:0px;top:651px;width:23px;height:38px;background:#dfe2fc"></div>
<div class="a" style="left:23px;top:651px;width:1px;height:38px;background:#d0e6f9"></div>
<div class="a" style="left:53px;top:651px;width:1px;height:38px;background:#d0e6f9"></div>
<div class="a" style="left:127px;top:651px;width:1px;height:38px;background:#d0e6f9"></div>
<div class="a" style="left:216px;top:651px;width:1px;height:38px;background:#d0e6f9"></div>
<div class="a" style="left:358px;top:651px;width:1px;height:38px;background:#d0e6f9"></div>
<div class="a" style="left:412px;top:651px;width:1px;height:38px;background:#d0e6f9"></div>
<div class="a" style="left:466px;top:651px;width:1px;height:38px;background:#d0e6f9"></div>
<div class="a" style="left:590px;top:651px;width:1px;height:38px;background:#d0e6f9"></div>
<div class="a" style="left:651px;top:651px;width:1px;height:38px;background:#d0e6f9"></div>
<div class="a" style="left:720px;top:651px;width:1px;height:38px;background:#d0e6f9"></div>
<div class="a" style="left:843px;top:651px;width:1px;height:38px;background:#d0e6f9"></div>
<div class="a" style="left:940px;top:651px;width:1px;height:38px;background:#d0e6f9"></div>
<div class="a" style="left:0px;top:689px;width:1044px;height:1px;background:#d0e6f9"></div>
<svg style="left:31px;top:663px" width="17" height="16" viewBox="0 0 17 16"><rect x="3.5" y="0.5" width="9" height="6.5" fill="#c3e6fb" stroke="#7f96b4" stroke-width="1"/><rect x="6.3" y="7" width="3.4" height="1.2" fill="#6f88a8"/><rect x="0.3" y="8.2" width="15.4" height="1.6" fill="#e3bd70" stroke="#c9a055" stroke-width="0.6"/><rect x="1.6" y="9.8" width="1.7" height="6" fill="#ebc373"/><rect x="12.7" y="9.8" width="1.7" height="6" fill="#ebc373"/><rect x="3.3" y="12.2" width="9.4" height="1.3" fill="#e6dfd2"/></svg>
<div class="t" style="left:61px;top:662.84px;">2025_001</div>
<div class="t" style="left:135px;top:662.84px;">Nábytok</div>
<div class="t" style="left:224px;top:655.54px;line-height:14px">drevená Stolička<br>vysoká</div>
<div class="t r" style="left:254.8px;width:150px;top:662.84px;">100</div>
<div class="t r" style="left:308.8px;width:150px;top:662.84px;">2025</div>
<div class="t" style="left:474px;top:662.84px;">Učiteľ 07</div>
<div class="t r" style="left:493.8px;width:150px;top:662.84px;">30.00</div>
<div class="t r" style="left:562.8px;width:150px;top:662.84px;">3000.00</div>
<div class="t" style="left:728px;top:662.84px;">18. 03. 2025</div>
<div class="t" style="left:851px;top:662.84px;"></div>
<div class="t" style="left:948px;top:662.84px;">kúpa</div>
<div class="a" style="left:24px;top:690px;width:1020px;height:33px;background:#fafafa"></div>
<div class="a" style="left:0px;top:690px;width:23px;height:33px;background:#dfe2fc"></div>
<div class="a" style="left:23px;top:690px;width:1px;height:33px;background:#d0e6f9"></div>
<div class="a" style="left:53px;top:690px;width:1px;height:33px;background:#d0e6f9"></div>
<div class="a" style="left:127px;top:690px;width:1px;height:33px;background:#d0e6f9"></div>
<div class="a" style="left:216px;top:690px;width:1px;height:33px;background:#d0e6f9"></div>
<div class="a" style="left:358px;top:690px;width:1px;height:33px;background:#d0e6f9"></div>
<div class="a" style="left:412px;top:690px;width:1px;height:33px;background:#d0e6f9"></div>
<div class="a" style="left:466px;top:690px;width:1px;height:33px;background:#d0e6f9"></div>
<div class="a" style="left:590px;top:690px;width:1px;height:33px;background:#d0e6f9"></div>
<div class="a" style="left:651px;top:690px;width:1px;height:33px;background:#d0e6f9"></div>
<div class="a" style="left:720px;top:690px;width:1px;height:33px;background:#d0e6f9"></div>
<div class="a" style="left:843px;top:690px;width:1px;height:33px;background:#d0e6f9"></div>
<div class="a" style="left:940px;top:690px;width:1px;height:33px;background:#d0e6f9"></div>
<div class="a" style="left:0px;top:723px;width:1044px;height:1px;background:#d0e6f9"></div>
<svg style="left:31px;top:699px" width="17" height="16" viewBox="0 0 17 16"><rect x="3.5" y="0.5" width="9" height="6.5" fill="#c3e6fb" stroke="#7f96b4" stroke-width="1"/><rect x="6.3" y="7" width="3.4" height="1.2" fill="#6f88a8"/><rect x="0.3" y="8.2" width="15.4" height="1.6" fill="#e3bd70" stroke="#c9a055" stroke-width="0.6"/><rect x="1.6" y="9.8" width="1.7" height="6" fill="#ebc373"/><rect x="12.7" y="9.8" width="1.7" height="6" fill="#ebc373"/><rect x="3.3" y="12.2" width="9.4" height="1.3" fill="#e6dfd2"/></svg>
<div class="t" style="left:61px;top:699.84px;">137B</div>
<div class="t" style="left:135px;top:699.84px;">Nábytok</div>
<div class="t" style="left:224px;top:699.84px;">stolička žiacka</div>
<div class="t r" style="left:254.8px;width:150px;top:699.84px;">1</div>
<div class="t r" style="left:308.8px;width:150px;top:699.84px;"></div>
<div class="t" style="left:474px;top:699.84px;">Učiteľ 05</div>
<div class="t r" style="left:493.8px;width:150px;top:699.84px;"></div>
<div class="t r" style="left:562.8px;width:150px;top:699.84px;"></div>
<div class="t" style="left:728px;top:699.84px;"></div>
<div class="t" style="left:851px;top:699.84px;"></div>
<div class="t" style="left:948px;top:699.84px;">kúpa</div>
<div class="a" style="left:24px;top:724px;width:1020px;height:33px;background:#ffffff"></div>
<div class="a" style="left:0px;top:724px;width:23px;height:33px;background:#dfe2fc"></div>
<div class="a" style="left:23px;top:724px;width:1px;height:33px;background:#d0e6f9"></div>
<div class="a" style="left:53px;top:724px;width:1px;height:33px;background:#d0e6f9"></div>
<div class="a" style="left:127px;top:724px;width:1px;height:33px;background:#d0e6f9"></div>
<div class="a" style="left:216px;top:724px;width:1px;height:33px;background:#d0e6f9"></div>
<div class="a" style="left:358px;top:724px;width:1px;height:33px;background:#d0e6f9"></div>
<div class="a" style="left:412px;top:724px;width:1px;height:33px;background:#d0e6f9"></div>
<div class="a" style="left:466px;top:724px;width:1px;height:33px;background:#d0e6f9"></div>
<div class="a" style="left:590px;top:724px;width:1px;height:33px;background:#d0e6f9"></div>
<div class="a" style="left:651px;top:724px;width:1px;height:33px;background:#d0e6f9"></div>
<div class="a" style="left:720px;top:724px;width:1px;height:33px;background:#d0e6f9"></div>
<div class="a" style="left:843px;top:724px;width:1px;height:33px;background:#d0e6f9"></div>
<div class="a" style="left:940px;top:724px;width:1px;height:33px;background:#d0e6f9"></div>
<div class="a" style="left:0px;top:757px;width:1044px;height:1px;background:#d0e6f9"></div>
<svg style="left:31px;top:733px" width="17" height="16" viewBox="0 0 17 16"><rect x="3.5" y="0.5" width="9" height="6.5" fill="#c3e6fb" stroke="#7f96b4" stroke-width="1"/><rect x="6.3" y="7" width="3.4" height="1.2" fill="#6f88a8"/><rect x="0.3" y="8.2" width="15.4" height="1.6" fill="#e3bd70" stroke="#c9a055" stroke-width="0.6"/><rect x="1.6" y="9.8" width="1.7" height="6" fill="#ebc373"/><rect x="12.7" y="9.8" width="1.7" height="6" fill="#ebc373"/><rect x="3.3" y="12.2" width="9.4" height="1.3" fill="#e6dfd2"/></svg>
<div class="t" style="left:61px;top:733.84px;">201</div>
<div class="t" style="left:135px;top:733.84px;">Nábytok</div>
<div class="t" style="left:224px;top:733.84px;">stolička žiacka</div>
<div class="t r" style="left:254.8px;width:150px;top:733.84px;">1</div>
<div class="t r" style="left:308.8px;width:150px;top:733.84px;"></div>
<div class="t" style="left:474px;top:733.84px;">Učiteľ 05</div>
<div class="t r" style="left:493.8px;width:150px;top:733.84px;">25.00</div>
<div class="t r" style="left:562.8px;width:150px;top:733.84px;">25.00</div>
<div class="t" style="left:728px;top:733.84px;"></div>
<div class="t" style="left:851px;top:733.84px;"></div>
<div class="t" style="left:948px;top:733.84px;">kúpa</div>
<div class="a" style="left:24px;top:758px;width:1020px;height:33px;background:#fafafa"></div>
<div class="a" style="left:0px;top:758px;width:23px;height:33px;background:#dfe2fc"></div>
<div class="a" style="left:23px;top:758px;width:1px;height:33px;background:#d0e6f9"></div>
<div class="a" style="left:53px;top:758px;width:1px;height:33px;background:#d0e6f9"></div>
<div class="a" style="left:127px;top:758px;width:1px;height:33px;background:#d0e6f9"></div>
<div class="a" style="left:216px;top:758px;width:1px;height:33px;background:#d0e6f9"></div>
<div class="a" style="left:358px;top:758px;width:1px;height:33px;background:#d0e6f9"></div>
<div class="a" style="left:412px;top:758px;width:1px;height:33px;background:#d0e6f9"></div>
<div class="a" style="left:466px;top:758px;width:1px;height:33px;background:#d0e6f9"></div>
<div class="a" style="left:590px;top:758px;width:1px;height:33px;background:#d0e6f9"></div>
<div class="a" style="left:651px;top:758px;width:1px;height:33px;background:#d0e6f9"></div>
<div class="a" style="left:720px;top:758px;width:1px;height:33px;background:#d0e6f9"></div>
<div class="a" style="left:843px;top:758px;width:1px;height:33px;background:#d0e6f9"></div>
<div class="a" style="left:940px;top:758px;width:1px;height:33px;background:#d0e6f9"></div>
<div class="a" style="left:0px;top:791px;width:1044px;height:1px;background:#d0e6f9"></div>
<svg style="left:31px;top:767px" width="17" height="16" viewBox="0 0 17 16"><rect x="3.5" y="0.5" width="9" height="6.5" fill="#c3e6fb" stroke="#7f96b4" stroke-width="1"/><rect x="6.3" y="7" width="3.4" height="1.2" fill="#6f88a8"/><rect x="0.3" y="8.2" width="15.4" height="1.6" fill="#e3bd70" stroke="#c9a055" stroke-width="0.6"/><rect x="1.6" y="9.8" width="1.7" height="6" fill="#ebc373"/><rect x="12.7" y="9.8" width="1.7" height="6" fill="#ebc373"/><rect x="3.3" y="12.2" width="9.4" height="1.3" fill="#e6dfd2"/></svg>
<div class="t" style="left:61px;top:767.84px;">202</div>
<div class="t" style="left:135px;top:767.84px;">Nábytok</div>
<div class="t" style="left:224px;top:767.84px;">stolička žiacka</div>
<div class="t r" style="left:254.8px;width:150px;top:767.84px;">1</div>
<div class="t r" style="left:308.8px;width:150px;top:767.84px;"></div>
<div class="t" style="left:474px;top:767.84px;">Učiteľ 05</div>
<div class="t r" style="left:493.8px;width:150px;top:767.84px;">25.00</div>
<div class="t r" style="left:562.8px;width:150px;top:767.84px;">25.00</div>
<div class="t" style="left:728px;top:767.84px;"></div>
<div class="t" style="left:851px;top:767.84px;"></div>
<div class="t" style="left:948px;top:767.84px;">kúpa</div>
<div class="a" style="left:24px;top:792px;width:1020px;height:33px;background:#ffffff"></div>
<div class="a" style="left:0px;top:792px;width:23px;height:33px;background:#dfe2fc"></div>
<div class="a" style="left:23px;top:792px;width:1px;height:33px;background:#d0e6f9"></div>
<div class="a" style="left:53px;top:792px;width:1px;height:33px;background:#d0e6f9"></div>
<div class="a" style="left:127px;top:792px;width:1px;height:33px;background:#d0e6f9"></div>
<div class="a" style="left:216px;top:792px;width:1px;height:33px;background:#d0e6f9"></div>
<div class="a" style="left:358px;top:792px;width:1px;height:33px;background:#d0e6f9"></div>
<div class="a" style="left:412px;top:792px;width:1px;height:33px;background:#d0e6f9"></div>
<div class="a" style="left:466px;top:792px;width:1px;height:33px;background:#d0e6f9"></div>
<div class="a" style="left:590px;top:792px;width:1px;height:33px;background:#d0e6f9"></div>
<div class="a" style="left:651px;top:792px;width:1px;height:33px;background:#d0e6f9"></div>
<div class="a" style="left:720px;top:792px;width:1px;height:33px;background:#d0e6f9"></div>
<div class="a" style="left:843px;top:792px;width:1px;height:33px;background:#d0e6f9"></div>
<div class="a" style="left:940px;top:792px;width:1px;height:33px;background:#d0e6f9"></div>
<div class="a" style="left:0px;top:825px;width:1044px;height:1px;background:#d0e6f9"></div>
<svg style="left:31px;top:801px" width="17" height="16" viewBox="0 0 17 16"><rect x="3.5" y="0.5" width="9" height="6.5" fill="#c3e6fb" stroke="#7f96b4" stroke-width="1"/><rect x="6.3" y="7" width="3.4" height="1.2" fill="#6f88a8"/><rect x="0.3" y="8.2" width="15.4" height="1.6" fill="#e3bd70" stroke="#c9a055" stroke-width="0.6"/><rect x="1.6" y="9.8" width="1.7" height="6" fill="#ebc373"/><rect x="12.7" y="9.8" width="1.7" height="6" fill="#ebc373"/><rect x="3.3" y="12.2" width="9.4" height="1.3" fill="#e6dfd2"/></svg>
<div class="t" style="left:61px;top:801.84px;">205</div>
<div class="t" style="left:135px;top:801.84px;">Nábytok</div>
<div class="t" style="left:224px;top:801.84px;">stolička žiacka</div>
<div class="t r" style="left:254.8px;width:150px;top:801.84px;">4</div>
<div class="t r" style="left:308.8px;width:150px;top:801.84px;"></div>
<div class="t" style="left:474px;top:801.84px;">Učiteľ 05</div>
<div class="t r" style="left:493.8px;width:150px;top:801.84px;"></div>
<div class="t r" style="left:562.8px;width:150px;top:801.84px;"></div>
<div class="t" style="left:728px;top:801.84px;"></div>
<div class="t" style="left:851px;top:801.84px;"></div>
<div class="t" style="left:948px;top:801.84px;">kúpa</div>
<div class="a" style="left:24px;top:826px;width:1020px;height:33px;background:#fafafa"></div>
<div class="a" style="left:0px;top:826px;width:23px;height:33px;background:#dfe2fc"></div>
<div class="a" style="left:23px;top:826px;width:1px;height:33px;background:#d0e6f9"></div>
<div class="a" style="left:53px;top:826px;width:1px;height:33px;background:#d0e6f9"></div>
<div class="a" style="left:127px;top:826px;width:1px;height:33px;background:#d0e6f9"></div>
<div class="a" style="left:216px;top:826px;width:1px;height:33px;background:#d0e6f9"></div>
<div class="a" style="left:358px;top:826px;width:1px;height:33px;background:#d0e6f9"></div>
<div class="a" style="left:412px;top:826px;width:1px;height:33px;background:#d0e6f9"></div>
<div class="a" style="left:466px;top:826px;width:1px;height:33px;background:#d0e6f9"></div>
<div class="a" style="left:590px;top:826px;width:1px;height:33px;background:#d0e6f9"></div>
<div class="a" style="left:651px;top:826px;width:1px;height:33px;background:#d0e6f9"></div>
<div class="a" style="left:720px;top:826px;width:1px;height:33px;background:#d0e6f9"></div>
<div class="a" style="left:843px;top:826px;width:1px;height:33px;background:#d0e6f9"></div>
<div class="a" style="left:940px;top:826px;width:1px;height:33px;background:#d0e6f9"></div>
<div class="a" style="left:0px;top:859px;width:1044px;height:1px;background:#d0e6f9"></div>
<svg style="left:31px;top:835px" width="17" height="16" viewBox="0 0 17 16"><rect x="3.5" y="0.5" width="9" height="6.5" fill="#c3e6fb" stroke="#7f96b4" stroke-width="1"/><rect x="6.3" y="7" width="3.4" height="1.2" fill="#6f88a8"/><rect x="0.3" y="8.2" width="15.4" height="1.6" fill="#e3bd70" stroke="#c9a055" stroke-width="0.6"/><rect x="1.6" y="9.8" width="1.7" height="6" fill="#ebc373"/><rect x="12.7" y="9.8" width="1.7" height="6" fill="#ebc373"/><rect x="3.3" y="12.2" width="9.4" height="1.3" fill="#e6dfd2"/></svg>
<div class="t" style="left:61px;top:835.84px;">227/52</div>
<div class="t" style="left:135px;top:835.84px;">Nábytok</div>
<div class="t" style="left:224px;top:835.84px;">stolička žiacka</div>
<div class="t r" style="left:254.8px;width:150px;top:835.84px;">1</div>
<div class="t r" style="left:308.8px;width:150px;top:835.84px;">2020</div>
<div class="t" style="left:474px;top:835.84px;">Učiteľ 05</div>
<div class="t r" style="left:493.8px;width:150px;top:835.84px;"></div>
<div class="t r" style="left:562.8px;width:150px;top:835.84px;"></div>
<div class="t" style="left:728px;top:835.84px;">01. 01. 2020</div>
<div class="t" style="left:851px;top:835.84px;"></div>
<div class="t" style="left:948px;top:835.84px;">kúpa</div>
</div>
<div class="a" style="left:1290px;top:219px;width:14px;height:855px;background:#fafafa"></div>
<svg style="left:1293px;top:223px" width="9" height="7" viewBox="0 0 9 7"><path d="M4.5 0 L9 6.5 H0 Z" fill="#8a8a8a"/></svg>
<div class="a" style="left:1293px;top:659px;width:9px;height:173px;background:#8a8a8a;border-radius:4.5px"></div>
<svg style="left:1293px;top:1063px" width="9" height="7" viewBox="0 0 9 7"><path d="M0 0 H9 L4.5 6.5 Z" fill="#8a8a8a"/></svg>
<div class="a" style="left:246px;top:1074px;width:1058px;height:14px;background:#fafafa"></div>
<svg style="left:250px;top:1077px" width="8" height="9" viewBox="0 0 8 9"><path d="M8 0 V9 L0 4.5 Z" fill="#8a8a8a"/></svg>
<div class="a" style="left:264px;top:1077px;width:975px;height:9px;background:#8a8a8a;border-radius:4.5px"></div>
<svg style="left:1279px;top:1077px" width="7" height="9" viewBox="0 0 7 9"><path d="M0 0 V9 L7 4.5 Z" fill="#8a8a8a"/></svg>
<div class="a" style="left:921px;top:153px;width:165px;height:66px;background:#fff;border:1px solid #e0e0e0;box-shadow:2px 3px 6px rgba(0,0,0,.28)"></div>
<div class="t" style="left:940px;top:163.54px;font-size:12px;line-height:14px;color:#2a2a2a">Výber tlačovej zostavy...</div>
<div class="t" style="left:940px;top:189.44px;font-size:12px;line-height:14px;color:#2a2a2a">Rýchla tlač...</div>
<div class="a" style="left:926px;top:183px;width:97px;height:31px;border:4px solid #ff0000"></div>
<div class="a" style="left:6px;top:48px;width:1298px;height:4px;background:linear-gradient(rgba(0,0,0,.13),rgba(0,0,0,0))"></div>
<div class="a" style="left:5px;top:5px;width:1300px;height:1084px;border:1px solid #6f6f6f;pointer-events:none"></div></body></html>
